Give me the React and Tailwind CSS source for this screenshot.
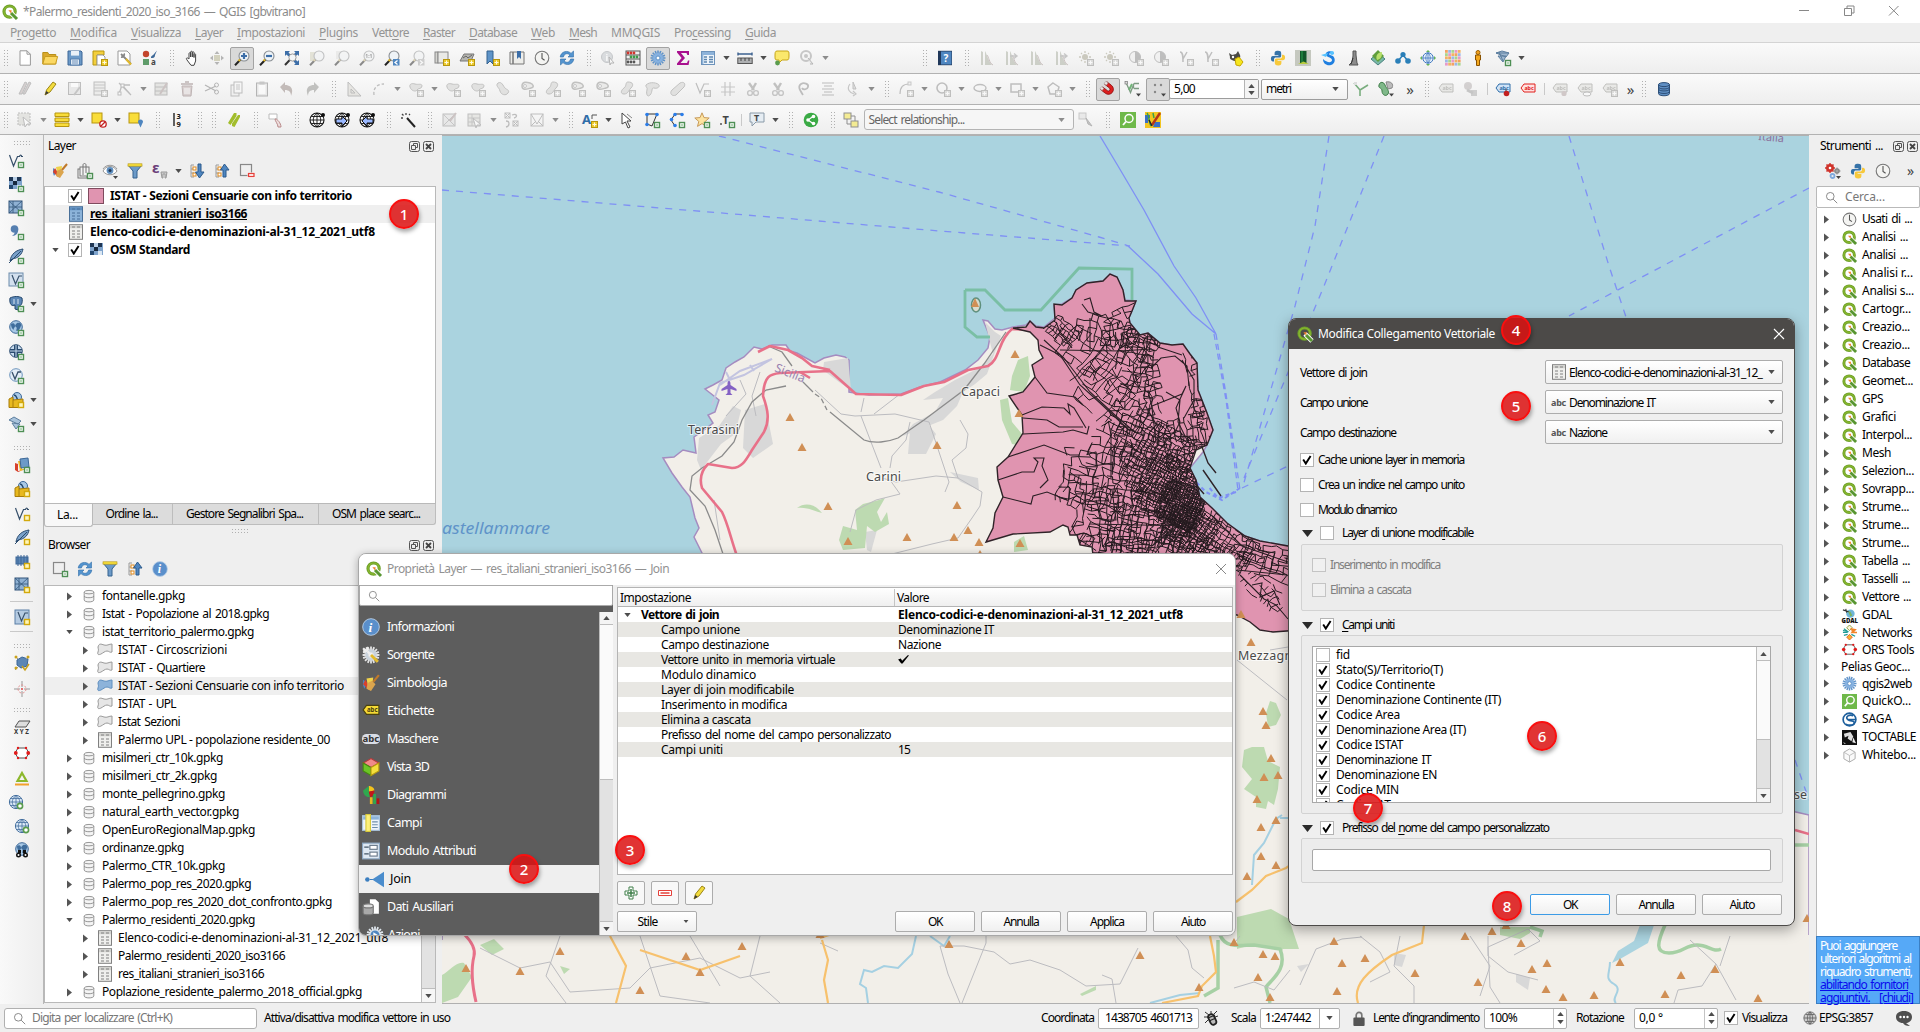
import React, { useLayoutEffect, useRef } from "react";

/* ---------- text fitted to the column width it was designed for ---------- */
function T({ w, className = "", children }) {
  const ref = useRef(null);
  useLayoutEffect(() => {
    const el = ref.current;
    if (!w || !el) return;
    el.style.letterSpacing = "0px";
    el.style.wordSpacing = "0px";
    const n = el.textContent.length || 1;
    if (w / el.getBoundingClientRect().width < 0.93) el.style.wordSpacing = "1.4px";
    el.style.letterSpacing = (w - el.getBoundingClientRect().width) / n + "px";
  }, [w]);
  return (
    <span ref={ref} className={"inline-block shrink-0 whitespace-pre " + className}>
      {children}
    </span>
  );
}

/* ---------- icon helpers, all on a 16px grid ---------- */
const p = (d, s = "none", f = "none", w = 1) => <path d={d} stroke={s} fill={f} strokeWidth={w} />;
const c = (x, y, r, f, s = "none", w = 1) => <circle cx={x} cy={y} r={r} fill={f} stroke={s} strokeWidth={w} />;
const r = (x, y, w, h, f, s = "none", sw = 1) => <rect x={x} y={y} width={w} height={h} fill={f} stroke={s} strokeWidth={sw} />;
const tx = (x, y, s, t, f = "#444", b = 700) => (
  <text x={x} y={y} fontSize={s} fill={f} fontWeight={b} fontFamily="Noto Sans, sans-serif">{t}</text>
);
const Y = <g>{r(9.5, 9.5, 6, 6, "#edcb2c", "#b7960f")}{p("M12.5 10.5v4M10.5 12.5h4", "#fffbe0")}</g>;
const G = <g>{r(10.5, 10.5, 5, 5, "#fff", "#4e8f55", 1.4)}{p("M13 11.8v2.4M11.8 13h2.4", "#8cbf90", "none", 0.8)}</g>;
const YB = <g>{r(10.5, 10.5, 5, 5, "#fff6b8", "#d3a90c", 1.4)}</g>;
const GR = <g>{r(9.5, 9.5, 6, 6, "#c9c9c5", "#8d8d88")}{p("M12.5 10.5v4M10.5 12.5h4", "#fff")}</g>;
const lens = (
  <g>{c(10, 6, 5, "#eef3f7", "#8a8f94", 1.1)}{p("M6.3 9.8L1 15.2", "#222", "none", 2)}{p("M6 9.5L4.6 11", "#e3b928", "none", 2)}</g>
);
const qlogo = (
  <g>
    {c(7.6, 7.6, 5.6, "none", "#6da12b", 3.2)}
    {c(7.6, 7.6, 5.6, "none", "#8db92e", 1.2)}
    {p("M8 8l7 7", "#fff", "none", 4.6)}
    {p("M9 9l6 6", "#589632", "none", 3)}
    {p("M6.4 6.2h3.2l-.4 3.2z", "none", "#f0802a")}
  </g>
);
const blob = p("M2 6C1 3 4 2 7 3s7-1 7 2-4 2-5 4-6 1-7-3z", "#8e8e8a", "#cfcfca");
const globe = (
  <g>{c(8, 8, 6.6, "#dbe9f7", "#456f9e")}{p("M8 1.5v13M1.5 8h13M3 4.5h10M3 11.5h10M8 1.5c-5 4-5 9 0 13M8 1.5c5 4 5 9 0 13", "#456f9e", "none", 0.8)}</g>
);
const bglobe = (
  <g>{c(8, 8, 7, "#fff", "#111", 1.1)}{p("M8 1v14M1 8h14M2.5 4.5h11M2.5 11.5h11M8 1c-5 4-5 10 0 14M8 1c5 4 5 10 0 14", "#111", "none", 0.9)}{c(14, 3, 2, "#111")}</g>
);
const earth = <g>{c(8, 7, 6.3, "#a9c9e6", "#3c6797")}{p("M3 4c3-2 4 0 4 2s-2 2-1 4c-2-1-3-3-3-6zM9 3c3-1 5 1 4 3s-2 5-4 5 1-3-1-4 0-3 1-4z", "none", "#3f6d9c")}</g>;
const vee = p("M1.5 3l4 11L9.5 4.5h2c1-3 3 0 1.5 0h2", "#37506b", "none", 1.2);
const cyl = (f, s) => <g>{p("M2.5 3.5v9c0 3 11 3 11 0v-9", s, f)}<ellipse cx="8" cy="3.6" rx="5.5" ry="2" fill={f} stroke={s} />{p("M2.5 8c0 2.6 11 2.6 11 0", s)}</g>;
const tbl = (f, s, h) => <g>{r(1.5, 0.7, 13, 14.6, f, s)}{r(2, 1.2, 12, 3, h)}{p("M4 3h3M9 3h3M4 7h3M9 7h3M4 10h3M9 10h3M4 13h3M9 13h3", s)}</g>;
const poly = (f, s) => p("M1 5c1-4 3-3 6-2s5-1 8-1v8c-2 1-3-1-5-1s-4 2-6 3-4 1-3-2 0-3 0-5z", s, f);
const gear = (f, s) => <g>{p("M8 .5v15M.5 8h15M2.7 2.7l10.6 10.6M13.3 2.7L2.7 13.3M5.2 1l5.6 14M1 5.2l14 5.6M10.8 1L5.2 15M15 5.2L1 10.8", s, "none", 1.6)}{c(8, 8, 5, f)}{c(8, 8, 2, "#fff", s)}</g>;
const brush = <g>{p("M1 5l4 3-3 5-1-3z", "none", "#4f86c6")}{p("M1 9l5 5 2-1-5-8z", "none", "#d7412c")}{p("M4 4l6-1-1 8-3 3z", "none", "#f0d24a")}{p("M5 8l4-2 3 3-4 6-4-2z", "none", "#dba54e")}{p("M10 7l5-6", "#c0792a", "none", 2)}</g>;
const pencil = <g>{p("M3 14l1.5-5L11 1l3 2-6 8z", "#9b8517", "#f3dc3e")}{p("M3 14l1.3-4 2.4 1.8z", "none", "#3a3a3a")}</g>;
const raster = <g>{r(1, 1, 13, 12, "#7ea3cc")}{r(1, 1, 4, 4, "#1f3654")}{r(9, 1, 4, 4, "#1f3654")}{r(5, 5, 4, 4, "#16283e")}{r(1, 9, 4, 4, "#23476f")}{r(9, 9, 4, 4, "#dbe7f3")}{r(5, 1, 4, 4, "#b9cfe6")}</g>;
const mesh = <g>{r(1, 1, 13, 12, "#8fb1d3", "#32557a")}{p("M1 7h13M1 1l13 12M14 1L1 13M5 1v12", "#32557a", "none", 0.8)}</g>;
const treeD = p("M2 2h3M2 2v12h3M2 6h3M2 10h3", "#9b9b9b");
const sq = (x, y) => r(x, y, 3, 3, "#fff", "#e08a1c");
const label = (f, s) => <g>{p("M1 7l3-4h11v8H4z", s, f)}{tx(4.4, 9.3, 5.4, "abc", s)}</g>;
const cut = <g>{p("M4 2l5 7M11 2L7 9", "#8e8e8a", "none", 2.4)}{c(5, 12, 2.4, "none", "#999", 1.4)}{c(11, 12, 2.4, "none", "#999", 1.4)}</g>;
const hist = <g>{p("M3 1v14h2V2zM7 15V1c2 3 3 10 7 14z", "none", "#a3b08c")}{p("M9 5c2 2 2 8 6 10", "#b78686")}</g>;
const sun = <g>{c(7, 7, 3, "#a8a06a")}{p("M7 1v2M7 11v2M1 7h2M11 7h2M3 3l1 1M10 10l1 1M3 11l1-1M10 4l1-1", "#a8a06a", "none", 1.3)}</g>;

const ICONS = {
  q: qlogo,
  new: <g>{p("M3 .8h7l3.4 3.4v11H3z", "#999", "#fff")}{p("M10 .8v3.4h3.4", "#999")}</g>,
  open: <g>{p("M.8 2.5h5l1 2h7V14H.8z", "#b8901a", "#dba92c")}{p("M3 6.5h12.6L13.6 14H.8z", "#c99d20", "#fbd863")}</g>,
  save: <g>{p("M1 1h13l1 1v13H1z", "#3c6797", "#6c9ac8")}{r(4, 1, 8, 4.6, "#e9f0f7")}{r(3.5, 9, 9, 6, "#dfe9f3", "#557fae")}{p("M5 11h6M5 13h6", "#557fae", "none", 0.8)}</g>,
  tmpl: <g>{p("M1 1h11v4h-7v10H1z", "#b7960f", "#f3cf3c")}{p("M5 5h6l2 2v8H5z", "#999", "#fff")}{Y}</g>,
  layout: <g>{p("M1 1h9l3 3v11H1z", "#999", "#fff")}{p("M4 4l3 3M7 3.5c1 2-1 4-3 3.5M7 7l7 7", "#888", "none", 1.8)}{p("M9 9l5 5.5", "#e2b92b", "none", 2)}</g>,
  style: <g>{c(4, 4, 3.2, "#c3452c")}{p("M9 8c0-3 2-2 3-4l3-3.5-2 4.5c0 3-2 3-4 3z", "none", "#3c6797")}{r(1, 9, 6, 6, "#5f9c6a")}{tx(9, 15, 8, "a")}</g>,
  pan: p("M5 9V3.5c0-1 1.6-1 1.6 0V7 2c0-1 1.7-1 1.7 0v5-4.5c0-1 1.7-1 1.7 0V7.5 4.5c0-1 1.6-1 1.6 0V11l-1.6 4.3H7L3 10c-1.4-2 0-3 2-1z", "#444", "#fff"),
  pansel: <g>{p("M8 1l2.5 3h-5zM8 15l2.5-3h-5zM1 8l3-2.5v5zM15 8l-3-2.5v5z", "none", "#777")}{r(5, 5, 6, 6, "#b9b352")}</g>,
  zoomin: <g>{lens}{p("M10 3v6M7 6h6", "#3c6ea8", "none", 2.2)}</g>,
  zoomout: <g>{lens}{p("M7 6h6", "#3c6ea8", "none", 2.2)}</g>,
  zoomfull: <g>{p("M1 1h5L4.5 2.5l2 2-2 2-2-2L1 6zM15 1v5l-1.5-1.5-2 2-2-2 2-2L10 1zM15 15h-5l1.5-1.5-2-2 2-2 2 2L15 10z", "none", "#3c6ea8")}{c(8.5, 7.5, 3.6, "#f3f6f8", "#999")}{p("M5.5 10.3L1 15", "#333", "none", 2)}</g>,
  zsel: <g>{r(1, 2, 8, 9, "#d6d39a")}{lens}</g>,
  zlay: <g>{r(2, 1, 7, 8, "#e0e0dc")}{lens}</g>,
  z11: <g>{lens}{tx(6.3, 8, 5, "1:1")}</g>,
  zprev: <g>{lens}{r(9, 9, 6.5, 6.5, "#4f86c0")}{p("M13.5 10.5l-2.5 2 2.5 2", "#fff", "none", 1.3)}</g>,
  znext: <g>{lens}{r(9, 9, 6.5, 6.5, "#aaa")}{p("M11 10.5l2.5 2-2.5 2", "#fff", "none", 1.3)}</g>,
  newmap: <g>{r(1, 2, 3, 11, "#d5d5d1", "#888")}{r(4, 2, 10, 11, "#e9e9e6", "#888")}{Y}</g>,
  new3d: <g>{p("M1 11l4-7h10l-3 7z", "#777", "#b5b5b0")}{p("M4 8l3-2 2 2 4-3", "#666")}{Y}</g>,
  bmnew: <g>{p("M3 1h6v13l-3-3-3 3z", "#34628f", "#5f94c8")}{Y}</g>,
  book: <g>{p("M1 2h3v12H1zM4 2h11v12H4z", "#777", "#ededea")}{p("M8 1h4v8l-2-2-2 2z", "none", "#3c6ea8")}</g>,
  clock: <g>{c(8, 8, 6.8, "#f4f4f2", "#777", 1.1)}{p("M8 3v5.4l2.6 1.8", "#555", "none", 1.1)}</g>,
  refresh: <g>{p("M1.2 7C2 1 9 0 12 3.4L14.5 1v6H9l2-2C8 2.5 5 4 4.4 7zM14.8 9C14 15 7 16 4 12.6L1.5 15V9H7l-2 2c3 2.5 6 1 6.6-2z", "#2f6da8", "#5494cf", 0.6)}</g>,
  ident: <g>{c(7, 7, 5.5, "#b8c4d0", "#8f9aa5")}{tx(5.5, 10.5, 9, "i", "#fff")}{p("M9 7l5 6-3 0-1 2z", "#777", "#fff")}</g>,
  abacus: <g>{r(1, 1, 14, 14, "#eee", "#555")}{p("M1 5h14M1 9h14", "#555")}{[3, 6, 9].map((x) => <g key={x}>{c(x, 3, 1.4, "#d0342c")}{c(x + 3, 7, 1.4, "#3c9a48")}{c(x, 12, 1.4, "#555")}</g>)}</g>,
  gear: gear("#86b1e0", "#5f92c8"),
  sigma: p("M2 1h12v4h-1.6L11.5 3H6l4 5-4.5 5H12l1-2.4h1.4L13.6 15H2v-1.4L6.6 8 2 2.4z", "none", "#a8108e"),
  table: <g>{r(1.5, 1.5, 13, 13, "#eef4fa", "#6d93bb")}{r(2, 2, 12, 3, "#8db3da")}{p("M4 7h3M9 7h4M4 9.5h3M9 9.5h4M4 12h3M9 12h4", "#5e86b0", "none", 1.3)}{r(2, 5, 1.4, 9, "#8db3da")}</g>,
  ruler: <g>{p("M1 4h14M1 2.5v3M15 2.5v3", "#3c6190", "none", 1.4)}{r(0.8, 8, 14.4, 5.5, "#aeb0b2", "#555")}{p("M4 8v3M8 8v3M12 8v3", "#444")}</g>,
  tip: <g>{p("M3 1h10c2 0 2 1 2 4s0 5-2 5H8l-3 3v-3H3C1 10 1 9 1 6s0-5 2-5z", "#c7a617", "#fbe86c")}{c(3.5, 13, 2.4, "#5a9c4e")}</g>,
  loc: <g>{c(7, 6, 5, "none", "#999", 2)}{c(7, 6, 2, "#999")}{p("M9 8l5 6h-3", "#777", "#ddd")}</g>,
  help: <g>{r(1, 0.8, 14, 14.4, "#20385a")}{r(4, 1.5, 10.5, 13, "#4f86c0")}{tx(6.5, 12, 10, "?", "#fff")}</g>,
  hist,
  hist2: <g>{hist}{p("M7 6h6M11 3.5l3 2.5-3 2.5", "#999", "none", 1.4)}</g>,
  sun1: <g>{sun}{GR}</g>,
  half: <g>{c(7, 7, 5.5, "#eee", "#888")}{p("M7 1.5a5.5 5.5 0 0 1 0 11z", "none", "#888")}{GR}</g>,
  gam: <g>{p("M2 2c3 0 3 4 3 10M9 2L5 9", "#888", "none", 1.5)}{GR}</g>,
  cat: <g>{p("M1 3l3 2 4-1 2-3 2 4c1 3-1 6-4 6S1 9 2 7z", "none", "#4b4a45")}{c(5, 7, 1.2, "#fff")}{p("M7 9l4-2 4 5-3 4-4-1z", "#c7a600", "#f6e61e")}</g>,
  python: <g>{p("M8 .8c-3 0-3.4 1-3.4 3v1.4H8.4V6H3C1 6 .8 8 1 9.5S2 11.6 4 11.6V9.4C4 8 5 7.6 6 7.6h3.4c1.2 0 1.8-.8 1.8-1.8V3.6C11.2 1.4 10.4.8 8 .8z", "none", "#3673a8")}{p("M8 15.4c3 0 3.4-1 3.4-3V11H7.6v-.8H13c2 0 2.2-2 2-3.4S14 4.8 12 4.8v2C12 8 11 8.6 10 8.6H6.6c-1.2 0-1.8.8-1.8 1.8v2.2c0 2.200.8 2.800 3.200 2.800z", "none", "#f7c93c")}</g>,
  batt: <g>{r(0, 0, 16, 16, "#c5c8bf")}{r(5, 1, 6.5, 13, "#12572a")}{r(6, 1, 2, 11, "#1e7b3c")}{p("M3 14h11l-5.500-2.500z", "none", "#b8cc3f")}</g>,
  swirl: <g>{p("M14 4c0-3-6-4-8-1-2 4 6 4 6 7s-5 3-9-1c0 5 4 7 8 6 4-1 5-6 2-9-2-1-4-1-4-2s3-1 5 0z", "none", "#1f7fe0")}{p("M1 5l7-2-2 4z", "none", "#58c3ff")}{c(12, 3, 2, "#58c3ff")}</g>,
  fig: <g>{p("M8 1h3v4l1 8 1 2H4l3-3 1-6z", "#555", "#8c8c8c")}{p("M8 8l-2 6", "#333")}</g>,
  leaf: <g>{p("M8 3l7 6-7 6-7-6z", "#49817f", "#79b8a6")}{p("M8 0l6 6-6 6-6-6z", "none", "#5f9e3d")}{p("M7 10C5 6 8 2 12 2c0 5-1 7-5 8z", "none", "#b8e06c")}</g>,
  nodes: <g>{p("M3 11L8 5l5 6", "#2a7fb8", "none", 1.5)}{c(8, 4.5, 2.6, "#2a7fb8")}{c(3, 11, 2.8, "#2a7fb8")}{c(13, 11, 2.8, "#2a7fb8")}</g>,
  gnav: <g>{c(8, 8, 5.2, "#eaf3fb", "#3f77c0")}{p("M8 2.8v10.400M2.800 8h10.400M8 2.800c-3 3-3 7 0 10.400M8 2.800c3 3 3 7 0 10.400", "#3f77c0", "none", 0.8)}{p("M8 0l2 2H6zM8 16l2-2H6zM0 8l2-2v4zM16 8l-2-2v4z", "none", "#64b45a")}</g>,
  grid: <g>{[0, 1, 2, 3, 4].map((i) => [0, 1, 2, 3, 4].map((j) => <g key={i + "" + j}>{r(j * 3.2, i * 3.2, 2.8, 2.8, ["#f4a261", "#9db8e8", "#a9d68e", "#e79acb", "#f2b366"][(i * 2 + j) % 5])}</g>))}</g>,
  person: <g>{c(8, 2.500, 2, "#f0a020", "#9c6100")}{p("M5.500 5h5v5h-1v5.500H6.500V10h-1z", "#8a5200", "#f3a81f")}</g>,
  meshlay: <g>{p("M1 3l6-2 7 2-3 4zM3 6h8l-3 6z", "#5d7f9f", "#9fb8d0")}{p("M1 3h13M4 2l4 9", "#5d7f9f")}{G}</g>,
  pencils: <g>{p("M2 13L8 1l2 1-5 11zM6 13l6-12 2 1-6 11z", "#888", "#c9a9a9")}</g>,
  pencil,
  saved: <g>{r(1.500, 1.500, 12, 12, "#ddd", "#888")}{r(4, 2, 7, 4, "#fff")}{p("M7 14l6-8", "#999", "none", 2)}</g>,
  rec: <g>{r(2, 1, 11, 13, "#e5e5e0", "#888")}{p("M2 4h11M2 7h11M2 10h11", "#999")}{GR}</g>,
  vtool: <g>{p("M2 13L5 4M5 4h8M5 4l8 9M2 2l12 12", "#888", "none", 1.300)}{r(4, 3, 3, 3, "#fff", "#888")}{r(1, 11, 3, 3, "#fff", "#888")}</g>,
  editrec: <g>{r(1, 2, 12, 12, "#d5d5c9", "#888")}{p("M1 6h12M1 10h12", "#888")}{p("M6 13L13 2", "#b98d8d", "none", 2)}</g>,
  trash: <g>{p("M2 3h12M6 1h4", "#a06e6e", "none", 1.500)}{p("M3 5h10l-1 10H4z", "#a06e6e", "#d3a9a9")}{p("M6 7v6M8 7v6M10 7v6", "#fff")}</g>,
  cutx: <g>{p("M1 4l11 6M1 10l11-5", "#777", "none", 1.300)}{c(12.500, 4, 2, "none", "#777")}{c(12.500, 11, 2, "none", "#777")}</g>,
  copy: <g>{r(2, 4, 8, 11, "#eee", "#888")}{r(5, 1, 8, 11, "#f7f7f7", "#888")}{p("M7 4h4M7 6h4M7 8h4", "#999")}</g>,
  paste: <g>{r(2.500, 2, 11, 13, "#ddd", "#777")}{r(4.500, 4, 7, 9, "#fff")}{r(5.500, 0.500, 5, 3, "#999")}</g>,
  undo: p("M1 6l5-5v3c6 0 9 4 6 11 0-4-2-6-6-6v3z", "none", "#a47f72"),
  redo: p("M15 6l-5-5v3c-6 0-9 4-6 11 0-4 2-6 6-6v3z", "none", "#8e8e86"),
  setsq: p("M2 1v14h13zM5 8v4h4z", "#888", "#ddd8c6"),
  curve: <g><path d="M3 14C2 7 6 3 13 3" stroke="#888" fill="none" strokeWidth="1.300" strokeDasharray="3 2" /></g>,
  blob: <g>{blob}{GR}</g>,
  blob2: <g>{p("M3 2c4-2 5 3 7 5s5 2 3 5-7 2-8-2-5-5-2-8z", "#8e8e8a", "#d0d0cb")}</g>,
  blob3: <g>{p("M2 5c0-5 5-4 8-3s5 4 1 5-9 3-9-2z", "#8e8e8a", "#e1e1dc", 1.500)}{c(5, 5, 1.500, "#fff", "#999")}{GR}</g>,
  blob4: <g>{p("M8 1c5 0 6 3 3 6s-3 6-7 6-3-4 0-6 1-6 4-6z", "#8e8e8a", "#cfcfca")}{GR}</g>,
  shape: p("M1 4c4-4 12-2 13 0s-2 4-5 3-1 4-4 7-4-2-3-5-2-3-1-5z", "#8e8e8a", "#cfcfca"),
  slug: p("M10 2c4-2 6 1 4 4l-8 8c-4 2-7-2-4-5z", "#8e8e8a", "#cfcfca"),
  cutg: cut,
  vnode: <g>{p("M1 2l4 10L9 3h5", "#888", "none", 1.200)}{GR}</g>,
  cross: <g>{p("M5 1v14M10 1v14M1 6h14M1 11h14", "#999", "none", 1.200)}</g>,
  spiral: <g>{p("M8 14C4 8 3 5 6 3s8 0 7 3-5 3-6 1", "#888", "none", 1.800)}</g>,
  lines: p("M2 2h12M4 5h8M2 8h12M4 11h8M2 14h12", "#aaa", "none", 1.500),
  rot: <g>{p("M8 1l3 7h-3z", "#888", "#ccc")}{p("M5 3c-4 5 0 9 4 10M8 10l3 3-3 2", "#999", "none", 1.200)}</g>,
  arcn: <g>{p("M2 13C2 6 5 3 11 3", "#888", "none", 1.200)}{r(10, 1, 3, 3, "#eee", "#999")}{GR}</g>,
  circ: <g>{c(7, 7, 5, "none", "#888", 1.600)}{GR}</g>,
  elli: <g><ellipse cx="8" cy="7" rx="6" ry="3.500" fill="none" stroke="#888" strokeWidth="1.400" />{GR}</g>,
  rectn: <g>{r(2, 3, 10, 8, "none", "#888", 1.500)}{GR}</g>,
  pent: <g>{p("M7 2l6 4-2 7H4L2 6z", "#888", "none", 1.500)}{GR}</g>,
  magnet: (
    <g transform="rotate(-52 8 8)">
      {p("M3 2.500v6a5 5 0 0 0 10 0v-6H9.700v6a1.700 1.700 0 0 1-3.400 0v-6z", "#8f1010", "#dd1f1f", 0.8)}
      {r(3.2, 1.5, 2.8, 2.8, "#f0e4e4", "#999", 0.5)}{r(10, 1.5, 2.8, 2.8, "#f0e4e4", "#999", 0.5)}
    </g>
  ),
  vsnap: <g>{p("M1 1.500l4.500 10L9 2.500M8.500 2.500v5M9 7.500h5M9 2.500h5", "#7d9b82", "none", 1.300)}{r(0, 0.500, 2.500, 2.500, "#ddd", "#777", 0.7)}{p("M4 9l3-6", "#6fb477", "none", 2)}{p("M11 12.500h5l-2.500 3z", "none", "#444")}</g>,
  dots: <g>{c(5, 4, 1.200, "#888")}{c(11, 4, 1.200, "#888")}{c(5, 11, 1.200, "#888")}{p("M11 12.500h5l-2.500 3z", "none", "#444")}</g>,
  yline: <g>{p("M1 2l6 7v6M7 9l8-5", "#79ad7e", "none", 1.600)}{r(1, 1, 3, 3, "#ddd")}</g>,
  topo: <g>{p("M8 1c5-1 8 2 6 6l-4 1z", "#888", "#bbb")}{p("M1 4c1-4 5-3 6 0s5 6 3 9-6 1-6-3-4-2-3-6z", "#3f7d49", "#7fb889")}{p("M11 12.500h5l-2.500 3z", "none", "#444")}</g>,
  lab: label("#deded2", "#8a8a80"),
  labs: <g>{c(5, 5, 4, "#b9a9a9")}{r(8, 9, 6, 6, "#aaa")}{p("M4 9l6 3", "#999", "none", 3)}</g>,
  labp: <g>{label("#cfe3f7", "#2f6da8")}{p("M11 8v3", "#333")}{c(11.500, 12.500, 2.800, "#c32020")}</g>,
  labr: label("#ffe1e1", "#e0201c"),
  labg: <g>{label("#deded2", "#8a8a80")}{c(12, 12.500, 2.600, "#c49a9a")}</g>,
  laba: <g>{label("#deded2", "#8a8a80")}{GR}</g>,
  labe: <g>{label("#deded2", "#8a8a80")}<ellipse cx="10" cy="13" rx="4" ry="2" fill="#fff" stroke="#888" /></g>,
  db: <g>{cyl("#5f8fc4", "#2d4f78")}{p("M2.500 6c0 2.600 11 2.600 11 0M2.500 10.500c0 2.600 11 2.600 11 0", "#2d4f78")}</g>,
  sel: <g><rect x="1" y="1" width="12" height="12" fill="#d4d4c4" stroke="#888" strokeDasharray="2 1" />{p("M6 5l8 7h-4l-2 3z", "#888", "#fff")}</g>,
  form: <g>{p("M1 1h14v3.500H1zM1 6h14v3.500H1zM1 11h14v3.500H1z", "#b7960f", "#f9dd3a")}</g>,
  desel: <g>{r(1, 1, 10, 10, "#f9dd3a", "#b7960f")}{c(12, 12, 3.200, "#fff", "#c32020", 1.300)}{p("M10 14l4-4", "#c32020", "none", 1.300)}</g>,
  selloc: <g>{r(1, 1, 10, 10, "#f9dd3a", "#b7960f")}{p("M10 10a2.500 2.500 0 1 1 5 0l-2.500 5.500z", "none", "#4f86c0")}</g>,
  num: <g>{p("M4 1v13", "#111", "none", 1.300)}{tx(6.500, 7, 7.500, "3", "#111")}{tx(6.500, 15, 7.500, "9", "#111")}</g>,
  slash: <g>{p("M2 11L8 1h2.500v3L4.500 13zM6 14v-2.500L12 3h2v2L8.500 15z", "none", "#a2bd2c")}</g>,
  point: <g>{p("M2 2h8v5H2z", "#bbb", "#fff")}{p("M9 7c1 0 5 4 5 8h-3c0-3-3-6-3-8z", "#b98989", "#ecdcdc")}</g>,
  g1: bglobe,
  g2: <g>{bglobe}{p("M2 7h6V4l5 5-5 5v-3H2z", "#111", "#9ab8ff")}</g>,
  g3: <g>{bglobe}{p("M14 7H8V4L3 9l5 5v-3h6z", "#111", "#9ab8ff")}</g>,
  wand: <g>{p("M7 6l8 9", "#222", "none", 2)}{p("M2 2l1.500 1.500M6 1v2M1 6h2M9 3l1-1", "#444", "none", 1.300)}</g>,
  geo: <g>{r(1, 2, 12, 12, "#ddd", "#888")}{p("M1 2l12 12M13 2L1 14", "#999")}{p("M8 9l6-8", "#b98d8d", "none", 2)}</g>,
  geo2: <g>{r(1, 2, 12, 12, "#d9d9cc", "#888")}{p("M1 6h12M1 10h12M5 2v12", "#999")}{p("M6 6l8 7h-4l-1 3z", "#888", "#fff")}</g>,
  geo3: <g>{r(1, 1, 5, 5, "none", "#888")}{r(9, 9, 5, 5, "none", "#888")}{p("M1 1l5 5M6 1L1 6M9 9l5 5M14 9l-5 5", "#888")}{p("M8 3c5-2 6 2 2 3M2 9c4 0 4 5 0 6", "#888", "none", 1.300)}</g>,
  geo4: <g>{r(2, 2, 12, 12, "none", "#888")}{p("M2 2l6 10 6-10M2 14l4-4M14 14l-4-4", "#888")}</g>,
  lab2: <g>{tx(0, 12, 13, "A", "#2f6da8")}{p("M10 3h5M10 3v4", "#555")}{Y}</g>,
  arr: <g>{p("M3 1l9 8H8l3 6-2 1-2.500-6L3 12z", "#444", "#fff")}{p("M8 2l5 4", "#888")}</g>,
  polyg: <g>{p("M3 2h10l-5 12-5-2z", "#333", "#f0f0ee")}{c(3, 2.500, 1.800, "#2b7de9")}{c(13, 2.500, 1.800, "#2b7de9")}{c(3, 12.500, 1.800, "#2b7de9")}{G}</g>,
  polyl: <g>{p("M13 2H6L2 8l4 6", "#333")}{c(13, 2.500, 1.800, "#2b7de9")}{c(6, 2.500, 1.800, "#2b7de9")}{c(2.500, 7.500, 1.800, "#2b7de9")}{c(6, 13.500, 1.800, "#2b7de9")}{G}</g>,
  star: <g>{p("M8 .8l2 4.800 5.200.400-4 3.400 1.300 5L8 11.600l-4.500 2.800 1.300-5-4-3.400L6 5.600z", "#c79a5a", "#fde3a0")}{G}</g>,
  textT: <g>{tx(3.500, 12, 11, "T")}{c(2, 12, 1, "#555")}{G}</g>,
  tbox: <g>{p("M1 1h14v9H7l-4 4v-4H1z", "#8a9aa8", "#e6edf3")}{tx(5, 9, 9, "T")}</g>,
  share: <g>{c(8, 8, 7.300, "#3aaa45")}{p("M5 8l5-3.500M5 8l5 3.500", "#fff", "none", 1.200)}{c(5, 8, 1.800, "#fff")}{c(10.500, 4.500, 1.800, "#fff")}{c(10.500, 11.500, 1.800, "#fff")}</g>,
  rel: <g>{r(1, 1, 7, 6, "#f4ea7c", "#777")}{r(8, 9, 7, 6, "#f4ea7c", "#777")}{p("M4 7v5h4M8 4h4v5", "#777")}</g>,
  relx: <g>{r(1, 1, 7, 6, "#ddd", "#999")}{p("M8 6l6 8-4-2z", "#777", "#999")}</g>,
  quick: <g>{r(0, 0, 16, 16, "#6fb94a")}{c(9, 6.500, 4, "none", "#fff", 1.500)}{p("M6 9.500L3 13", "#fff", "none", 1.800)}</g>,
  osm: <g>{r(0, 0, 16, 16, "#f2c521")}{p("M0 3h5v3H3v5H0zM10 10h5v5H8z", "none", "#3b6fc4")}{p("M2 1c3 4 1 8 4 13M8 1l1 5", "#3ba04a", "none", 1.500)}{p("M7 13L15 1", "#b53518", "none", 2.400)}{p("M4 8l3 6", "#222", "none", 1.400)}</g>,
  vadd: <g>{vee}{G}</g>, vaddy: <g>{vee}{YB}</g>,
  rasadd: <g>{raster}{G}</g>, meshadd: <g>{mesh}{G}</g>, meshy: <g>{mesh}{YB}</g>,
  comma: <g>{c(6.500, 5, 3.800, "#557fb0")}{p("M10 4c1 5-2 8-6 8 3-2 3-4 3-6z", "none", "#557fb0")}{G}</g>,
  feather: <g>{p("M2 13C3 6 8 2 15 1c-1 5-4 9-11 10z", "#2b4c70", "#7aa1ca")}{p("M1 15L13 3", "#2b4c70")}{G}</g>,
  feathery: <g>{p("M2 13C3 6 8 2 15 1c-1 5-4 9-11 10z", "#2b4c70", "#7aa1ca")}{p("M1 15L13 3", "#2b4c70")}{YB}</g>,
  vbox: <g>{r(1, 1, 14, 13, "#d3e0ee", "#6d8cab")}{p("M4 3l3.500 9L11 4h3", "#37506b", "none", 1.200)}{G}</g>,
  vboxy: <g>{r(1, 1, 14, 14, "#b5cbe2", "#5a7fa6")}{p("M4 3l3.500 9L11 4h3", "#37506b", "none", 1.200)}{YB}</g>,
  pg: <g>{p("M2 2c4-2 9-2 12 0 1 5-1 8-3 8l-1 4-3-1V9c-3 2-6-1-5-7z", "#23466c", "#5b86b5")}{p("M6 3v5M10 3v5", "#dbe6f2")}{G}</g>,
  wms: <g>{earth}{G}</g>,
  wcs: <g>{c(8, 7, 6.300, "#c7dbee", "#2b4c70")}{p("M2 5h12v4H2zM6 1h4v12H6z", "none", "#2b4c70")}{p("M2 7h12M8 1v12", "#c7dbee")}{G}</g>,
  wfs: <g>{c(8, 7, 6.300, "#e4eef7", "#6c94bd")}{p("M4 4l3 7 3-7h3", "#37506b", "none", 1.300)}{G}</g>,
  box: <g>{c(9, 5, 4.500, "#a9c9e6", "#3c6797")}{p("M6 3c3 0 2 3 4 5", "#23466c", "none", 1.500)}{p("M1 7l4-2v3l10-1v7l-4 1.500H1z", "#a87d0b", "#e8b91f")}{p("M5 8v7", "#a87d0b")}{YB}</g>,
  mladd: <g>{p("M1 4l5-3 7 4-3 3zM4 7l8 1-4 5z", "#5d7f9f", "#a9c3dc")}{G}</g>,
  layers: <g>{p("M1 6l3 1v7l5-1-5 2-3-2z", "none", "#d7412c")}{p("M4 4l4 0v8l5 0-7 2z", "none", "#f0b92a")}{p("M6 2l8-1 1 9-8 1z", "#3c6797", "#6c9ac8")}{G}</g>,
  chip: <g>{r(2, 4, 12, 7, "#5b86b5", "#3c6797")}{p("M4 2v11M7 2v11M10 2v11M13 2v11", "#3c6797")}{YB}</g>,
  vert: <g>{p("M3 5l5-3 6 2-1 7-6 2-4-3z", "#3c6797", "#5b86b5")}{p("M1 1l3 3M15 1l-3 3M1 15l3-3", "#999")}{c(2, 2, 1.500, "#c9a21c")}{c(14, 2, 1.500, "#c9a21c")}{c(2, 13, 1.500, "#c9a21c")}{p("M8 11l3 4 4-6", "#c9a21c", "none", 1.500)}</g>,
  cross2: <g>{p("M8 0v6M8 10v6M0 8h6M10 8h6", "#999")}<circle cx="8" cy="8" r="4" fill="none" stroke="#e58c8c" strokeDasharray="2 1.500" />{c(8, 8, 0.900, "#d33")}</g>,
  xyz: <g>{p("M5 2h11l-4 6H1z", "#555", "#ddd")}{tx(0, 15, 6.200, "X Y Z", "#333")}</g>,
  hex: <g>{p("M4 3h8l3 5-3 5H4L1 8z", "#555", "#fff")}{c(1.800, 8, 1.900, "#e21a1a")}{c(14.200, 8, 1.900, "#e21a1a")}{c(4, 3, 1.200, "#e21a1a")}{c(12, 13, 1.200, "#e21a1a")}{c(12, 3, 1.200, "#e21a1a")}{c(4, 13, 1.200, "#e21a1a")}</g>,
  alpha: <g>{p("M8 3l4.500 8h-9z", "#8cb82c", "none", 2.200)}{p("M1 14.500h14", "#f2a12c", "none", 2)}</g>,
  gq: <g>{globe}{c(12, 12, 2.600, "#fff", "#5a9c4e", 1.600)}</g>,
  binoc: <g>{earth}{c(4.500, 13, 2.500, "#111")}{c(11.500, 13, 2.500, "#111")}{c(4.500, 13, 1, "#fff")}{c(11.500, 13, 1, "#fff")}{r(4, 8, 3, 3.500, "#111")}{r(9, 8, 3, 3.500, "#111")}</g>,
  brush,
  addgrp: <g>{r(1, 6, 9, 9, "#f4f4f4", "#777")}{r(3, 4, 9, 9, "#f4f4f4", "#777")}{p("M6 12V2c0-2 3-2 3 0v8", "#777")}{G}</g>,
  eye: <g>{p("M1 8c3-6 11-6 14 0-3 5-11 5-14 0z", "#999", "#fff")}{c(8, 7.500, 3.400, "#5f8fc0")}{c(8, 7.500, 1.500, "#1f3654")}{p("M1 6C4 1 12 1 15 6", "#999")}{p("M11 13h5l-2.500 3z", "none", "#444")}</g>,
  funnel: <g>{p("M1 2h14l-5 6v7H6V8z", "#34628f", "#6c9ac8")}{r(1, 0.800, 14, 2.400, "#f4dc3b", "#b7960f", 0.600)}</g>,
  eps: <g>{tx(0, 10, 15, "ε", "#6b3f7a")}{p("M9 9h6l-1 6h-1v-4h-2v4h-1z", "#999", "#ccc")}</g>,
  expd: <g>{treeD}{sq(4, 4)}{sq(4, 10)}{p("M9 1h3v8h3l-4.500 6L6.500 9H9z", "#2d5b8c", "#4f86c0")}</g>,
  expu: <g>{treeD}{sq(4, 4)}{sq(4, 10)}{p("M9 14h3V7h3l-4.500-6L6.500 7H9z", "#2d5b8c", "#4f86c0")}</g>,
  rem: <g>{r(1.500, 1.500, 11, 11, "none", "#888", 1.200)}{r(9, 10, 6.500, 4.500, "#fff", "#fff")}{r(9.500, 10.500, 5.500, 3, "#fff", "#e5403a", 1.300)}</g>,
  addl: <g>{r(1.500, 1.500, 11, 11, "none", "#888", 1.200)}{G}</g>,
  info: <g>{c(8, 8, 7.400, "#5a8fcb", "#b9cfe6", 0.800)}<text x="5.800" y="12.400" fontSize="12" fontStyle="italic" fontWeight="700" fill="#fff" fontFamily="Liberation Serif">i</text></g>,
  gpkg: cyl("#f4f4f4", "#888"),
  poly: poly("#e6e6e6", "#999"), polyb: poly("#8db3da", "#5f8fc0"),
  tbl: tbl("#efefed", "#808080", "#d2d2cf"), tblb: tbl("#8cb3d9", "#486f98", "#5f8fc0"),
  raster,
  wrench: <g>{gear("#c9d3dd", "#e3e3e3")}{p("M1 2l3 3M4 1c2 3 0 4-3 3M5 5l9 9", "#eee", "none", 2)}{p("M8 8l6 6", "#e2b92b", "none", 2.500)}</g>,
  laby: label("#f6da35", "#4a4210"),
  mask: <g><rect x="0" y="3.500" width="16" height="9" rx="4" fill="#d9dde6" />{tx(0.500, 11, 8.500, "abc", "#333")}</g>,
  cube: <g>{p("M8 .5l7 4-7 4-7-4z", "#b23b3b", "#f08a8a")}{p("M1 4.500l7 4v7l-7-4z", "#448a10", "#6cc427")}{p("M15 4.500l-7 4v7l7-4z", "#b79a10", "#f4e03c")}</g>,
  diag: <g>{p("M6 5V0c3 0 5 2 5 4z", "none", "#f3c21c")}{p("M6 5L11 4c0 3-2 6-4 6z", "none", "#c31818")}{p("M6 5l1 5C3 10 1 7 1 4l5-4z", "none", "#2fa84f")}{r(7, 10, 2.400, 6, "#e8b91f")}{r(10, 7, 2.400, 9, "#2fa84f")}{r(13, 11, 2.400, 5, "#b31313")}</g>,
  campi: <g>{r(0.500, 1.500, 15, 13, "#eef4fa", "#a9c3dc")}{r(1, 2, 14, 3, "#8db3da")}{p("M9 7h5M9 9.500h5M9 12h5", "#6d8cab")}{r(3.500, 0.500, 4, 15, "#fdf07a", "#d8c93a")}</g>,
  modulo: <g>{r(0.500, 1, 15, 14, "#dfe9f3", "#8da8c3")}{p("M2 4.500h4M2 10.500h4", "#456")}{r(7, 3, 6.500, 3.500, "#fff", "#678")}{r(7, 9, 6.500, 3.500, "#fff", "#678")}</g>,
  join: <g>{c(2, 8, 1.900, "#3c7fc0")}{p("M4 8h4", "#3c7fc0")}{p("M16 1.500v13L6 8z", "none", "#4a8ccc")}</g>,
  aux: <g>{p("M7 1h5l3 3v10H7z", "none", "#fff")}{p("M1 7v6c0 2.500 9 2.500 9 0V7", "#777", "#a9a9a9")}<ellipse cx="5.500" cy="7" rx="4.500" ry="1.800" fill="#ddd" stroke="#777" /></g>,
  act: <g>{gear("#dfe6ec", "#dfe6ec")}{c(8, 8, 4, "#4f86c0")}{p("M6.500 5.500l4 2.500-4 2.500z", "none", "#fff")}</g>,
  gears: <g>{c(5, 5, 2.800, "none", "#d0342c", 2.400)}{p("M5 0v10M0 5h10M1.500 1.500l7 7M8.500 1.500l-7 7", "#d0342c", "none", 1.400)}{c(5, 5, 1.300, "#fff")}{c(12, 8, 2, "none", "#888", 1.500)}{p("M12 4.500v7M8.500 8h7", "#888")}{c(7.500, 13, 2, "none", "#7fa9dc", 1.800)}{p("M11 13h5l-2.500 3z", "none", "#444")}</g>,
  gdal: <g>{c(9, 6, 4.500, "#6fb5d8")}{p("M6 3l3 1 2 4-2 1z", "none", "#7db35c")}{p("M1 2l6 2M4 1l1 4", "#333", "none", 1.200)}{tx(-0.500, 15.500, 6.400, "GDAL", "#111", 900)}</g>,
  netw: <g>{p("M8 0l3 3-3 3-3-3z", "#8a9e3b", "#fbf4dc", 1)}{p("M1 6l6 1M2 4l4 3M1 8h5", "#1e9b94", "none", 1.300)}{p("M9 4l5 1-3 3h5M10 6l3 0", "#f2842a", "none", 1.800)}{p("M8 16l3-3-3-3-3 3z", "#e0612a", "#f6b32a", 1)}{p("M2 11l4-1M10 10l4 2", "#1e9b94", "none", 1.300)}</g>,
  saga: <g>{c(8, 8, 6.800, "none", "#1d5f9c", 1.800)}{p("M12 4C8 2 3 5 6 8s6 0 7 3-5 4-9 2", "#1d5f9c", "none", 1.800)}{p("M6 8h9", "#1d5f9c", "none", 1.500)}</g>,
  toc: <g>{r(0, 0, 16, 16, "#111")}{p("M2 4l7-2 3 5-2 5-4-3 1-3-4 2zM1 13l3 1-1 1z", "none", "#ddd")}{p("M12 8l3 6-4-1z", "none", "#eee")}</g>,
  wb: <g>{p("M8 1l6 3.500v7L8 15l-6-3.500v-7z", "#aaa", "#fafafa")}{p("M8 15V8L2 4.500M8 8l6-3.500", "#bbb")}</g>,
  search: <g>{c(6.500, 6.500, 4.700, "none", "#888", 1.200)}{p("M10 10l5 5", "#888", "none", 1.200)}</g>,
};

const Ic = ({ n, s = "size-4" }) => (
  <svg viewBox="0 0 16 16" className={s + " shrink-0 overflow-visible"}>{ICONS[n]}</svg>
);
const Dn = ({ c: cl = "fill-[#4d4d4d]", s = "w-[7px] h-[4px]" }) => (
  <svg viewBox="0 0 8 5" className={s + " shrink-0 " + cl}><path d="M0 0h8L4 5z" /></svg>
);
const Up = () => <svg viewBox="0 0 8 5" className="h-[4px] w-[7px] shrink-0 fill-[#4d4d4d]"><path d="M0 5h8L4 0z" /></svg>;
const Rt = () => <svg viewBox="0 0 5 8" className="h-[9px] w-[5px] shrink-0 fill-[#555]"><path d="M0 0v8l5-4z" /></svg>;

/* Toolbar run: | handle, v / w arrows, s separator, - disabled, * pressed */
function Set({ t }) {
  return t.split(" ").map((k, i) => {
    if (k === "|")
      return (
        <div key={i} className="flex h-4 w-[16.5px] shrink-0 justify-end gap-[2px] pr-[5px]">
          <div className="w-px bg-[repeating-linear-gradient(#b0b0b0_0_1px,transparent_1px_3px)]" />
          <div className="w-px bg-[repeating-linear-gradient(#b0b0b0_0_1px,transparent_1px_3px)]" />
        </div>
      );
    if (k === "v" || k === "w")
      return <div key={i} className="flex w-3 shrink-0 justify-center"><Dn c={k === "v" ? "fill-[#4d4d4d]" : "fill-[#8c8c8c]"} /></div>;
    if (k === "s") return <div key={i} className="mx-[3px] h-3 w-px shrink-0 bg-[#c9c9c9]" />;
    if (k[0] === "-") return <div key={i} className="flex w-[25px] shrink-0 justify-center opacity-50 grayscale-[60%]"><Ic n={k.slice(1)} /></div>;
    if (k[0] === "*")
      return (
        <div key={i} className="flex w-[25px] shrink-0 justify-center">
          <div className="flex h-[23px] w-6 items-center justify-center rounded-[2px] border border-[#a3a3a3] bg-[#d9d9d9]"><Ic n={k.slice(1)} /></div>
        </div>
      );
    return <div key={i} className="flex w-[25px] shrink-0 justify-center"><Ic n={k} /></div>;
  });
}
const Bar = ({ h = "h-[31px]", children }) => (
  <div className={h + " flex shrink-0 items-center border-b border-[#b2b2b2] bg-gradient-to-b from-[#fafafa] to-[#eeeeee]"}>
    <div className="-ml-1" />
    {children}
  </div>
);

const Check = ({ on, off }) => (
  <div className={"flex size-[14px] shrink-0 items-center justify-center border " + (off ? "border-[#c4c4c4] bg-[#f0f0f0]" : "border-[#b4b4b4] bg-white")}>
    {on && <svg viewBox="0 0 10 10" className="size-[10px]"><path d="M1.200 4.600l2.600 4L8.600 1" fill="none" stroke="#000" strokeWidth="1.900" /></svg>}
  </div>
);
const Btn = ({ children, blue, w = "w-20" }) => (
  <div className={w + " flex h-[21px] shrink-0 items-center justify-center rounded-[2px] border bg-gradient-to-b from-white to-[#f0f0f0] " + (blue ? "border-[#3c9be6]" : "border-[#acacac]")}>{children}</div>
);
const Badge = ({ n, at }) => (
  <div className={"absolute flex size-[30px] items-center justify-center rounded-full border-2 border-[#fa0f0f] bg-[#dc1010]/85 text-[15px] font-medium text-white shadow-[1px_3px_4px_rgba(0,0,0,0.35)] " + at}>{n}</div>
);
const Float = () => (
  <div className="flex gap-[3px]">
    <svg viewBox="0 0 11 11" className="size-[11px]"><rect x=".5" y=".5" width="10" height="10" rx="2" fill="#eee" stroke="#555" /><path d="M4.500 4V2.500h4v4H7M2.500 4.500h4v4h-4z" fill="none" stroke="#555" /></svg>
    <svg viewBox="0 0 11 11" className="size-[11px]"><rect x=".5" y=".5" width="10" height="10" rx="2" fill="#eee" stroke="#555" /><path d="M3 3l5 5M8 3L3 8" stroke="#444" strokeWidth="1.800" /></svg>
  </div>
);
const Dots = () => (
  <div className="flex h-[4px] w-4 flex-col gap-[2px]">
    <div className="h-px bg-[repeating-linear-gradient(90deg,#b0b0b0_0_1px,transparent_1px_3px)]" />
    <div className="h-px bg-[repeating-linear-gradient(90deg,#b0b0b0_0_1px,transparent_1px_3px)]" />
  </div>
);
const U = ({ children }) => <span className="underline underline-offset-2">{children}</span>;

/* ---------- map ---------- */
function rng(seed) {
  let s = seed;
  return () => ((s = (s * 16807) % 2147483647) / 2147483647);
}
/* street blocks: centre x, centre y, width, height, angle, step, jitter, density */
const PATCHES = [
  [1105, 330, 60, 26, 12, 7, 1.5, 0.7], [1060, 328, 34, 18, 40, 4, 1.2, 0.8], [1122, 326, 44, 34, -20, 6, 1.5, 0.8],
  [1080, 352, 56, 40, 35, 9, 2, 0.7], [1118, 368, 50, 60, 38, 8, 2, 0.7], [1136, 352, 34, 44, 10, 6, 1.5, 0.8],
  [1104, 385, 50, 50, 45, 9, 2.5, 0.65], [1132, 405, 36, 60, 20, 6, 2, 0.8], [1148, 340, 26, 16, 20, 5, 1, 0.9],
  [1138, 440, 50, 56, 28, 5.5, 1.5, 0.85], [1160, 462, 60, 70, 28, 4, 1.2, 0.9], [1185, 448, 40, 60, -8, 6, 1.5, 0.8],
  [1175, 492, 70, 60, 28, 3, 1, 0.92], [1180, 505, 44, 44, 20, 2.3, 0.8, 0.95], [1190, 528, 50, 40, 35, 3.4, 1, 0.9],
  [1100, 478, 76, 66, 8, 8, 2.6, 0.7], [1090, 490, 60, 40, 20, 6, 2, 0.6], [1110, 450, 40, 50, 10, 8, 3, 0.6],
  [1120, 520, 90, 60, 5, 8, 2.5, 0.7], [1150, 535, 90, 50, 12, 5, 1.6, 0.8], [1115, 545, 60, 30, 5, 7, 2, 0.7],
  [1225, 538, 70, 34, 32, 5, 1.4, 0.85], [1262, 556, 60, 24, 14, 6, 1.6, 0.8], [1200, 548, 90, 24, 20, 5, 1.5, 0.8],
  [1196, 385, 14, 90, -8, 6, 2, 0.6], [1200, 425, 20, 50, -4, 6, 2, 0.6], [1085, 535, 30, 30, 30, 8, 3, 0.6],
  [1265, 590, 44, 18, 45, 5, 2, 0.45], [1270, 566, 60, 26, 20, 8, 2, 0.6], [1150, 385, 26, 60, -10, 6, 1.5, 0.75],
];
function streets() {
  const rnd = rng(4711);
  let d = "";
  for (const [cx, cy, w, h, a, st, j, dens] of PATCHES) {
    const co = Math.cos((a * Math.PI) / 180), si = Math.sin((a * Math.PI) / 180);
    const nx = Math.round(w / st), ny = Math.round(h / st);
    const g = [];
    for (let i = 0; i <= nx; i++) {
      g.push([]);
      for (let k = 0; k <= ny; k++) {
        const x = -w / 2 + i * st + (rnd() - 0.5) * 2 * j, y = -h / 2 + k * st + (rnd() - 0.5) * 2 * j;
        g[i].push([(cx + x * co - y * si).toFixed(1), (cy + x * si + y * co).toFixed(1)]);
      }
    }
    for (let i = 0; i <= nx; i++)
      for (let k = 0; k <= ny; k++) {
        const e = Math.hypot((i / nx - 0.5) * 2, (k / ny - 0.5) * 2);
        if (e > 1.25) continue;
        if (i < nx && rnd() < dens) d += `M${g[i][k]}L${g[i + 1][k]}`;
        if (k < ny && rnd() < dens) d += `M${g[i][k]}L${g[i][k + 1]}`;
      }
  }
  return d;
}
const COAST =
  "M702 553L694 537 699 528 695 518 690 497 682 487 672 473 663 458 674 457 683 450 696 453 694 437 704 430 713 423 708 415 715 412 719 400 705 389 713 385 722 380 726 368 735 362 744 357 754 347 762 349 772 345 786 345 790 351 797 353 806 358 815 363 824 358 836 355 845 357 849 360 849 392 855 393 869 395 901 394 920 387 940 382 965 370 978 360 988 348 990 337 983 320 988 321 995 329 1002 330 1013 327 1026 325 1030 321 1036 326 1044 327 1055 318 1054 305 1062 304 1072 298 1076 290 1087 283 1103 281 1110 274 1117 277 1123 290 1125 300 1136 301 1132 311 1129 318 1130 323 1140 335 1148 333 1160 343 1172 345 1183 344 1190 354 1197 363 1198 390 1207 413 1213 430 1207 445 1203 452 1190 468 1196 480 1200 497 1212 508 1227 523 1245 536 1260 541 1288 546 1500 640 1700 790 1809 815V1003H442V936z";
const COMUNE =
  "M1013 328L1026 327 1030 321 1036 327 1044 328 1055 320 1054 304 1062 305 1072 298 1076 290 1087 283 1103 281 1110 274 1117 277 1123 290 1125 301 1136 301 1132 311 1129 318 1130 323 1140 335 1148 333 1160 343 1172 345 1183 344 1190 354 1197 363 1198 390 1207 413 1213 430 1207 445 1196 450 1190 468 1196 480 1200 497 1212 508 1227 523 1245 536 1260 541 1288 546 1300 548V630L1273 632 1260 630 1250 622 1237 615 1090 600 1093 555 1092 547 1080 545 1077 535 1070 535 1068 527 1063 525 1050 532 1013 534 986 542 993 528 995 513 1003 497 998 480 997 467 1008 457 1023 433 1022 415 1009 396 1023 392 1035 377 1032 365 1043 358 1039 350 1038 340 1030 332z";
const PEAKS = [
  [790, 421], [802, 451], [828, 510], [937, 449], [957, 509], [968, 534], [954, 541], [980, 558], [907, 541], [848, 545], [1015, 358], [1019, 417],
  [1020, 547], [979, 546], [1241, 618], [1251, 646], [1263, 715], [1266, 729], [1271, 762], [1264, 781], [1278, 779], [1257, 803], [1276, 824], [1261, 831],
  [1261, 860], [1276, 869], [1247, 880], [949, 948], [1140, 959], [1119, 935], [1079, 936], [1234, 946], [1263, 958], [1275, 960], [1258, 981], [1199, 991], [1270, 1001],
  [1334, 945], [1342, 967], [1337, 995], [1365, 962], [1415, 977], [1465, 940], [1492, 935], [1506, 929], [1521, 947], [1478, 986], [1532, 973], [1547, 967], [1546, 993],
  [1563, 1001], [1594, 999], [1620, 966], [1681, 979], [1715, 973], [1665, 998], [1758, 1002], [1807, 922], [520, 975], [560, 955], [686, 960], [700, 976], [742, 950],
  [820, 938], [640, 994], [466, 972],
];
function MapView() {
  const d = streets();
  const g = "#bcbcc0";
  return (
    <svg viewBox="442 136 1367 867" className="block h-[867px] w-[1367px]" fontFamily="Noto Sans, sans-serif">
      <defs>
        <clipPath id="com"><path d={COMUNE} /></clipPath>
      </defs>
      <rect x="442" y="136" width="1367" height="867" fill="#aad3df" />
      <path d={COAST} fill="#f2efe9" stroke="#a58cc0" strokeWidth="1.500" />
      <path d="M442 940h200l60-5h1107v68H442z" fill="#f2efe9" />
      {/* urban areas */}
      <g fill="#d8d8d8">
        <path d="M699 438l20-12 14-20 8 4-6 24-14 10-20 26-4-10zM745 410l20-6 8 40-20 14-10-10z" />
        <path d="M824 362l24-4 3 32-12-8-16-12zM985 322l10 10 6 4-6 16-8 22-12 10-12 8-6 14-14 14-20 8-20 8 10-12 22-12 8-14-20 2 12-8 20-12 24-12 14-14z" />
        <path d="M910 432l18-8 8 10-10 20-18 0zM950 472l28 6 1 12-18-8zM865 532l12-2-6 22-4-2z" />
        <path d="M1394 953l12 2-4 12-8-2zM1516 974l14 4-2 12-12-8zM1297 966l12-2-8 8z" />
      </g>
      {/* woods */}
      <g fill="#bddab1">
        <path d="M797 508c8-6 18-4 25 5-8-2-14-6-25-5zM855 510l8-6 16-4 6-2-8 14 4 10 6-10 2 12-14 8-8-6-2 22-22 2-4-10 4-14 14 4zM1018 360l10-4 2 20-6 16-14-2 2-14zM1000 400l8-2 4 24 10 12 0 12-10-2-10-24zM1014 542l10-6 4 14-14 2z" />
        <path d="M1270 701l6 2 5 12-5 10-8 2-2-14zM1244 750l8-3 12 0 4 14 12 6-2 22-4 16-6-4-2 8-10-2 0-10-12-8 8-10-10-12z" />
        <path d="M1237 917l34-8 18 10 10 30-16 0-32-4-14 4z" />
        <path d="M1281 925l6 10-6 20zM1080 994l16-8v4l-14 6z" />
        <path d="M442 975c8-4 14-14 22-12l8 14-14 20-16 6zM480 945l14-6 10 10-12 6zM560 966l10 3-6 5zM1500 935l20 4 10-6v-6h-30z" />
      </g>
      <g fill="none" stroke="#a6d0a4" strokeWidth="3.500">
        <path d="M1220 935c6 14 20 10 34 10l26 4c8 20-8 30-14 38l4 16M1218 940v48l-14 8M1665 925c-8 18-10 28 4 28s16-8 28-8 16 8 24 4M1530 927l12 4-2 6" />
        <path d="M1795 845h14" />
      </g>
      <path d="M1640 925h14l-6 18-28 16-8 4 6-12 16-10z" fill="#aad3df" />
      <g fill="none" stroke="#a5d0e2" strokeWidth="2">
        <path d="M1610 962c0 12-6 16 4 22s-4 14 2 19M916 936l-4 18-14 14-14-2-12 6-8-2-4 14 6 4 2 15M930 936l14 10 6-10M1282 815l-6 4-12 24-10 12-2 30M1280 818h8M1200 993l-20 2-30 8" />
      </g>
      {/* minor roads */}
      <g fill="none" stroke={g} strokeWidth="1">
        <path d="M740 380l6 14-20 22M760 372l-8 24 4 20M815 390l26 24 14 2 40-2 34 8 20 60-4 10M864 398l-3 14M900 394l-26 20M861 416l20 52M910 422l-4 18-14 16-2 12M960 420l8 14-2 14-14 12 6 18-22-2-40 6-14-4M958 478l24 14-2 14-8 12-14 20-26 6-40 10M890 480l10 14-24 6-20 10-6 22" />
        <path d="M704 560l8 20M714 500l6 40M1237 660l50 40M1270 650l18-3" />
        <path d="M480 948l40 20 30-6 20 30 60-4 20-20 50-10 40 20 30-6M560 936l-14 40 20 27M640 936l20 60 50 7M690 936l30 50M760 936l-10 40 30 27M820 943l18 8M940 946l8 28 12 29M962 1003l24-60v-8M940 946l24 0 30 6 16 12 20-4 30 10 26 16 34-2 18-36M1102 975l10 4 4 24M1176 936l12 14 4 18 12 10M1290 970l-16 20-20-8-20 6M1300 985l16-36 26-10 20-2M1360 936l20 16 10 20-20 10M1400 936l-6 30 20 20 0 17M1470 936l20 30-10 30M1488 936v20l20 16 30 8M1500 1003l-10-16-2-40 40-18 12 12-26 14M1690 940l26 24-14 22-24 4-4 13M1716 964l20 36M1730 936l-10 30M1240 936l-8 10" />
      </g>
      <g fill="none" stroke="#8b8b8b" strokeWidth="1.300">
        <path d="M725 560l-10-30-10-24-15-16 2-14 10-8 20-12 12-14 8-22 10-18 14-12 20-4M792 366l-10-14-14-6M803 382l10 10M830 412l34 28c10 4 24 2 34-2l26-18 40-30 20-26 22-32" />
        <path d="M815 394l6 4 6 12" strokeDasharray="5 3" />
      </g>
      {/* motorways */}
      <g fill="none" stroke="#e87189" strokeWidth="2.600" strokeLinejoin="round">
        <path d="M737 556C730 536 728 524 722 512L702 488C699 478 702 470 708 464L732 468C742 468 746 460 752 450L764 432C770 420 768 410 763 396C764 376 770 374 780 373L830 371 856 394 901 395 924 386 944 382 968 370 988 366C1000 360 998 340 1012 329L1032 330 1040 342" />
        <path d="M758 352l12-6 18 4 14 8 10 8 18 4M800 372l10 6M1795 830l14 4" />
        <path d="M464 934c6 6 12 14 10 22s-4 20 2 46" strokeWidth="3" />
      </g>
      <g fill="none" stroke="#f7c16d" strokeWidth="2.200">
        <path d="M822 940l6 20-4 20 4 23M1298 860l-12 8-20 8-14 14-16 12M1424 925l-2 18-30 12c-24 16-40 30-34 48M1210 936l4 20 2 16-14 14-4 10-36 7M820 938l12-4M610 936l16 30-10 37M640 950l60 20 40-14" />
      </g>
      <path d="M720 385l20-14 32-12-28 16-24 8-8 22M726 372l4 8M750 365l4 6" fill="none" stroke="#c3c4e0" strokeWidth="2" />
      {/* marine reserve */}
      <path d="M965 290h20l20 20h36l38-42 53 1v34M965 290v37l12 10h13" fill="none" stroke="#7abfa5" strokeWidth="2.800" />
      {/* ferries */}
      <g fill="none" stroke="#7f90f5" strokeWidth="1.300" strokeDasharray="7 7">
        <path d="M442 190L940 231l190 15M719 136l220 56 160 45 30 9M1329 136l-14 90-20 80-52 180M1384 136l-60 150-80 192M1242 488l46-22M1569 136l40 130 40 120M1809 188l-240 128M1795 760l14 40" />
      </g>
      <g fill="none" stroke="#7f90f5" strokeWidth="1.300">
        <path d="M1100 136l18 30 26 44 30 56 22 32 20 36M1128 246l30 28 34 40 24 20" />
        <path d="M1216 334l10 60 14 96M1214 334l12 66 12 90" strokeDasharray="6 4" />
        <path d="M1240 488l-18 12-16-8-10-10M1236 492l-18 6-10-12" strokeDasharray="4 3" strokeWidth="2" />
      </g>
      <ellipse cx="976" cy="305" rx="4.500" ry="7" fill="#d9dccf" stroke="#5f8f7c" strokeWidth="1.500" />
      {/* municipality and census sections */}
      <g clipPath="url(#com)">
        <path d={COMUNE} fill="#e094b0" />
        <path d={d} fill="none" stroke="#231a1e" strokeWidth="1" />
        <g fill="none" stroke="#2a1f24" strokeWidth="1.100">
          <path d="M1035 377l12 16 28 4 8 8M1022 415l20-8 22 1 6 6-2-10 6 4 12 20M1023 418l24 2 12 7 24 0M1023 434l40-2 10-2 14 4 2-8M1008 457l36-12 26 10h10M998 480l24-8 12 0 4-10-4-4 10 0-2 8 6 14-8 8M1003 497l28 7 2-8 14-4 20 8M1040 345l20 10 20 30 20 18 30 28M1044 340l20 18 26 34 26 24 14 12M1060 350l60 1 32-2M1056 322l4 10 12 16M1090 318l0 34M1078 330l2 10M1084 300l6-2 4 14 8 4-14-4-6-8" />
          <path d="M1148 333l-2 20-6 14M1151 368l10-10 14-2 12 10 2 20M1148 390l4 18 4 34M1152 406l30-12 4-8-10 22 4 14-6 12M1166 392l14 8-2 22 10 20M1145 405l14 24-2 18M1182 360l12 20 0 20-10 18M1148 333l10 14 12 4 12 4" />
          <path d="M1111 428v50M1128 432l-8 30M1096 500l6 20 14 0-4-30M1090 524l100 2M1237 570l50 5M1240 575l24 24 12 6 12 14M1252 585l10-2-2 14 14-6 6 14M1212 516l30 30 46 16M1170 540l6 20M1172 530l-20 16 22-24M1150 560l30-40" />
        </g>
      </g>
      <path d={COMUNE} fill="none" stroke="#2f2328" strokeWidth="1.400" />
      <path d="M1202 447l6 16 8 10M1203 470l18 26M1192 480l12 14" fill="none" stroke="#2f2328" strokeWidth="1.400" />
      {/* peaks */}
      {PEAKS.map(([x, y], i) => <path key={i} d={`M${x} ${y - 8}l4.500 8h-9z`} fill="#d08f55" />)}
      <path d="M975 298l4 9h-8z" fill="#d08f55" />
      <path d="M729 381c1.500 0 1.500 2 1.500 4l6 4v2l-6-2v4l2 2h-7l2-2v-4l-6 2v-2l6-4c0-2 0-4 1.500-4z" fill="#8461c4" />
      <g fill="#4a4a4a" stroke="#fff" strokeWidth="2" strokeOpacity="0.7" paintOrder="stroke" fontSize="12.500">
        <text x="688" y="434" textLength="51">Terrasini</text>
        <text x="961" y="396" textLength="39">Capaci</text>
        <text x="866" y="481" textLength="35">Carini</text>
        <text x="1238" y="660" textLength="62">Mezzagno</text>
        <text x="1794" y="799">se</text>
      </g>
      <text x="442" y="534" fontSize="16" fontStyle="italic" fill="#5f93c9" textLength="108" lengthAdjust="spacingAndGlyphs">astellammare</text>
      <text x="774" y="371" fontSize="12" fill="#9a82b0" transform="rotate(22 774 371)">Sicilia</text>
      <text x="1758" y="140" fontSize="11" fill="#8a719c" transform="rotate(5 1758 140)">Italia</text>
    </svg>
  );
}

/* ---------- data ---------- */
const MENU = [
  [46, "P", "r", "ogetto"], [47, "", "M", "odifica"], [50, "", "V", "isualizza"], [28, "", "L", "ayer"], [68, "", "I", "mpostazioni"], [39, "", "P", "lugins"],
  [37, "Vett", "o", "re"], [32, "", "R", "aster"], [48, "", "D", "atabase"], [24, "", "W", "eb"], [28, "", "M", "esh"], [49, "MMQGIS", "", ""], [57, "Pro", "c", "essing"], [31, "", "G", "uida"],
];
const TREE = [
  [0, ">", "gpkg", "fontanelle.gpkg", 83], [0, ">", "gpkg", "Istat - Popolazione al 2018.gpkg", 167], [0, "v", "gpkg", "istat_territorio_palermo.gpkg", 152],
  [1, ">", "poly", "ISTAT - Circoscrizioni", 109], [1, ">", "poly", "ISTAT - Quartiere", 87], [1, ">", "polyb", "ISTAT - Sezioni Censuarie con info territorio", 226],
  [1, ">", "poly", "ISTAT - UPL", 58], [1, ">", "poly", "Istat Sezioni", 62], [1, ">", "tbl", "Palermo UPL - popolazione residente_00", 212],
  [0, ">", "gpkg", "misilmeri_ctr_10k.gpkg", 121], [0, ">", "gpkg", "misilmeri_ctr_2k.gpkg", 115], [0, ">", "gpkg", "monte_pellegrino.gpkg", 123],
  [0, ">", "gpkg", "natural_earth_vector.gpkg", 137], [0, ">", "gpkg", "OpenEuroRegionalMap.gpkg", 153], [0, ">", "gpkg", "ordinanze.gpkg", 82],
  [0, ">", "gpkg", "Palermo_CTR_10k.gpkg", 123], [0, ">", "gpkg", "Palermo_pop_res_2020.gpkg", 149], [0, ">", "gpkg", "Palermo_pop_res_2020_dot_confronto.gpkg", 230],
  [0, "v", "gpkg", "Palermo_residenti_2020.gpkg", 153], [1, ">", "tbl", "Elenco-codici-e-denominazioni-al-31_12_2021_utf8", 270],
  [1, ">", "tbl", "Palermo_residenti_2020_iso3166", 167], [1, ">", "tbl", "res_italiani_stranieri_iso3166", 146], [0, ">", "gpkg", "Poplazione_residente_palermo_2018_official.gpkg", 260],
];
const TOOLS = [
  ["clock", "Usati di ...", 50], ["q", "Analisi ...", 46], ["q", "Analisi ...", 46], ["q", "Analisi r...", 51], ["q", "Analisi s...", 52], ["q", "Cartogr...", 49], ["q", "Creazio...", 48],
  ["q", "Creazio...", 48], ["q", "Database", 48], ["q", "Geomet...", 51], ["q", "GPS", 21], ["q", "Grafici", 34], ["q", "Interpol...", 50], ["q", "Mesh", 29], ["q", "Selezion...", 52],
  ["q", "Sovrapp...", 52], ["q", "Strume...", 47], ["q", "Strume...", 47], ["q", "Strume...", 47], ["q", "Tabella ...", 48], ["q", "Tasselli ...", 48], ["q", "Vettore ...", 49],
  ["gdal", "GDAL", 30], ["netw", "Networks", 50], ["hex", "ORS Tools", 52], ["", "Pelias Geoc...", 69], ["gear", "qgis2web", 50], ["quick", "QuickO...", 49], ["saga", "SAGA", 30], ["toc", "TOCTABLE", 54], ["wb", "Whitebo...", 54],
];
const PROPS = [
  ["info", "Informazioni", 67], ["wrench", "Sorgente", 47], ["brush", "Simbologia", 60], ["laby", "Etichette", 47], ["mask", "Maschere", 51], ["cube", "Vista 3D", 42],
  ["diag", "Diagrammi", 59], ["campi", "Campi", 35], ["modulo", "Modulo Attributi", 89], ["join", "Join", 21], ["aux", "Dati Ausiliari", 66], ["act", "Azioni", 32],
];
const JOIN = [
  ["Campo unione", 79, "Denominazione IT", 96], ["Campo destinazione", 108, "Nazione", 43], ["Vettore unito in memoria virtuale", 174, "✔", 0], ["Modulo dinamico", 95],
  ["Layer di join modificabile", 133], ["Inserimento in modifica", 126], ["Elimina a cascata", 90], ["Prefisso del nome del campo personalizzato", 230], ["Campi uniti", 62, "15", 12],
];
const FIELDS = [
  ["fid", 14], ["Stato(S)/Territorio(T)", 107], ["Codice Continente", 99], ["Denominazione Continente (IT)", 165], ["Codice Area", 64], ["Denominazione Area (IT)", 130],
  ["Codice ISTAT", 67], ["Denominazione IT", 95], ["Denominazione EN", 101], ["Codice MIN", 63], ["Codice AT", 55],
];
const SIDE = [
  ["vadd"], ["rasadd"], ["meshadd"], ["comma"], ["feather"], ["vbox"], ["pg", 1], ["wms"], ["wcs"], ["wfs"], ["box", 1], ["mladd", 1],
];
const SideIc = ({ n, a }) => (
  <div className="flex h-6 shrink-0 items-center pl-2"><Ic n={n} />{a && <div className="ml-[6px]"><Dn /></div>}</div>
);
const SideIn = ({ n, h = "h-6" }) => <div className={h + " flex shrink-0 items-center pl-[14px]"}><Ic n={n} /></div>;

export default function App() {
  return (
    <div className="relative flex h-[1032px] w-[1920px] flex-col overflow-hidden bg-[#efefef] font-['Noto_Sans',sans-serif] text-[12px] leading-none text-black">
      {/* title bar */}
      <div className="flex h-[23px] shrink-0 items-center bg-white pl-[2px] text-[#8b8b8b]">
        <Ic n="q" />
        <T w={282} className="ml-[5px]">*Palermo_residenti_2020_iso_3166 — QGIS [gbvitrano]</T>
        <svg viewBox="0 0 112 12" className="mr-[10px] mb-[3px] ml-auto h-3 w-[112px]"><path d="M1 6.500h10M46.500 4.500h7v7h-7zM49 4.500v-2.500h7v7h-2.500M91 2l9.500 9.500M100.500 2L91 11.500" fill="none" stroke="#888" /></svg>
      </div>
      <div className="flex h-5 shrink-0 items-center gap-[14px] border-b border-[#d4d4d4] pl-[10px] text-[#949494]">
        {MENU.map(([w, a, b, e]) => <T key={a + b + e} w={w}>{a}<U>{b}</U>{e}</T>)}
      </div>
      <Bar>
        <Set t="| new open save tmpl layout style | pan -pansel *zoomin zoomout zoomfull -zsel -zlay -z11 zprev -znext newmap new3d bmnew book clock refresh | -ident abacus *gear sigma table v ruler v tip -loc w" />
        <div className="w-[84px] shrink-0" />
        <Set t="| help | -hist -hist2 -hist -hist2 -sun1 -sun1 -half -half -gam -gam cat | python batt swirl fig leaf nodes gnav grid person meshlay v" />
      </Bar>
      <Bar>
        <Set t="| -pencils pencil -saved -rec -vtool w -editrec -trash -cutx -copy -paste -undo -redo | -setsq -curve w -blob w -blob -blob -blob2 -blob3 -blob4 -blob3 -blob3 -blob4 -shape -slug -vnode -cross -cutg -cutg -spiral -lines -rot w | -arcn w -circ w -elli w -rectn w -pent w | *magnet vsnap *dots" />
        <div className="-ml-px flex h-5 w-[90px] shrink-0 items-center justify-between rounded-[2px] border border-[#9c9c9c] bg-white pl-1">
          <T w={21}>5,00</T>
          <div className="flex h-full w-[14px] flex-col items-center justify-center gap-[3px] border-l border-[#b4b4b4] bg-[#f4f4f4]"><Up /><Dn /></div>
        </div>
        <div className="ml-[2px] flex h-[21px] w-[87px] shrink-0 items-center justify-between rounded-[2px] border border-[#9c9c9c] bg-gradient-to-b from-white to-[#f0f0f0] pr-2 pl-1"><T w={25}>metri</T><Dn /></div>
        <Set t="yline topo" />
        <span className="w-[24px] shrink-0 text-center text-[15px] text-[#444]">»</span>
        <div className="-ml-[5px]" />
        <Set t="| -lab -labs s labp labr s -labg -labe -laba" />
        <span className="w-[16px] shrink-0 text-center text-[15px] text-[#444]">»</span>
        <div className="-ml-[4px]" />
        <Set t="| db" />
      </Bar>
      <Bar h="h-[30px]">
        <Set t="| -sel w form v desel v selloc | num |" />
        <div className="-ml-[2px]" />
        <Set t="| slash | point | g1 g2 g3 | wand | -geo -geo2 w -geo3 -geo4 w | lab2 v arr polyg polyl star textT" />
        <div className="-ml-[2px]" />
        <Set t="s tbox v | share |" />
        <div className="-ml-px flex w-[25px] shrink-0 justify-center opacity-80"><Ic n="rel" /></div>
        <div className="flex h-[21px] w-[210px] shrink-0 items-center justify-between rounded-[3px] border border-[#b4b4b4] bg-[#f6f6f6] pr-2 pl-1 text-[#666]"><T w={96}>Select relationship...</T><Dn c="fill-[#8c8c8c]" /></div>
        <Set t="-relx | quick osm" />
      </Bar>

      <div className="flex h-[869px] shrink-0">
        {/* side toolbar */}
        <div className="flex w-[44px] shrink-0 flex-col border-r border-[#b8b8b8] bg-gradient-to-r from-[#f9f9f9] to-[#eeeeee]">
          <div className="mt-[6px] flex h-[7px] shrink-0 justify-center"><Dots /></div>
          {SIDE.map(([n, a]) => <SideIc key={n} n={n} a={a} />)}
          <div className="mt-[10px] flex h-[6px] shrink-0 justify-center"><Dots /></div>
          <div className="h-[1px]" />
          <SideIn n="layers" /><SideIn n="box" /><SideIn n="vaddy" /><SideIn n="feathery" /><SideIn n="chip" /><SideIn n="meshy" />
          <div className="mx-[10px] my-[4px] h-px shrink-0 bg-[#c9c9c9]" />
          <SideIn n="vboxy" h="h-[21px]" />
          <div className="mx-[10px] my-[4px] h-px shrink-0 bg-[#c9c9c9]" />
          <div className="mt-[8px] flex h-[5px] shrink-0 justify-center"><Dots /></div>
          <SideIn n="vert" h="h-[27px]" /><SideIn n="cross2" h="h-[25px]" />
          <div className="mt-[7px] flex h-[6px] shrink-0 justify-center"><Dots /></div>
          <SideIn n="xyz" h="h-[26px]" /><SideIn n="hex" h="h-[25px]" /><SideIn n="alpha" h="h-[25px]" />
          <SideIc n="gq" /><SideIn n="gq" /><SideIn n="binoc" />
        </div>

        {/* left docks */}
        <div className="flex w-[392px] shrink-0 flex-col">
          <div className="flex h-[22px] shrink-0 items-center justify-between pr-[2px] pl-1"><T w={28}>Layer</T><Float /></div>
          <div className="flex h-[28px] shrink-0 items-center pb-px pl-[3px]"><Set t="brush addgrp eye funnel eps v expd expu rem" /></div>
          <div className="mt-[1px] flex h-[318px] shrink-0 flex-col border border-[#b9b9b9] bg-white font-bold">
            <div className="flex h-[18px] shrink-0 items-center pl-[23px]"><Check on /><div className="ml-[6px] size-4 border border-[#7f4b5e] bg-[#e094b0]" /><T w={242} className="ml-[6px]">ISTAT - Sezioni Censuarie con info territorio</T></div>
            <div className="flex h-[18px] shrink-0 items-center bg-[#efefef] pl-[23px]"><Ic n="tblb" /><T w={157} className="ml-[6px] underline underline-offset-1">res_italiani_stranieri_iso3166</T></div>
            <div className="flex h-[18px] shrink-0 items-center pl-[23px]"><Ic n="tbl" /><T w={285} className="ml-[6px]">Elenco-codici-e-denominazioni-al-31_12_2021_utf8</T></div>
            <div className="flex h-[18px] shrink-0 items-center pl-[7px]"><Dn /><div className="ml-[9px]"><Check on /></div><div className="ml-[7px]"><Ic n="raster" /></div><T w={80} className="ml-[5px]">OSM Standard</T></div>
          </div>
          <div className="flex h-[23px] shrink-0 items-start">
            <div className="flex h-[23px] w-[49px] items-center justify-center rounded-b-[3px] border border-t-0 border-[#b9b9b9] bg-[#f8f8f8] pr-[2px]"><T w={21}>La...</T></div>
            <div className="flex h-[21px] w-[80px] items-center justify-center border-r border-b border-[#bdbdbd] bg-[#dcdcdc] pr-[2px]"><T w={52}>Ordine la...</T></div>
            <div className="flex h-[21px] w-[146px] items-center justify-center border-r border-b border-[#bdbdbd] bg-[#dcdcdc] pr-[2px]"><T w={117}>Gestore Segnalibri Spa...</T></div>
            <div className="flex h-[21px] w-[117px] items-center justify-center rounded-br-[3px] border-r border-b border-[#bdbdbd] bg-[#dcdcdc] pr-[2px]"><T w={88}>OSM place searc...</T></div>
          </div>
          <div className="flex h-[8px] shrink-0 items-center justify-center"><Dots /></div>
          <div className="flex h-[20px] shrink-0 items-center justify-between pr-[2px] pl-1"><T w={42}>Browser</T><Float /></div>
          <div className="flex h-[28px] shrink-0 items-center pb-px pl-[3px]"><Set t="addl refresh funnel expu info" /></div>
          <div className="mt-[2px] flex h-[418px] shrink-0 overflow-hidden border border-[#b9b9b9] bg-white">
            <div className="flex w-[376px] shrink-0 flex-col pt-[1px]">
              {TREE.map(([lv, ar, ic, t, w]) => (
                <div key={t} className={"flex h-[18px] shrink-0 items-center " + (lv ? "pl-[37px] " : "pl-[21px] ") + (ic === "polyb" ? "bg-[#efefef]" : "")}>
                  <div className="flex w-[7px] justify-center">{ar === ">" ? <Rt /> : <Dn />}</div>
                  <div className="ml-[8px] flex w-4 justify-center">{ic === "gpkg" ? <Ic n={ic} s="size-[14px]" /> : <Ic n={ic} />}</div>
                  <T w={w} className="ml-[5px]">{t}</T>
                </div>
              ))}
            </div>
            <div className="flex w-[14px] flex-col justify-end border-l border-[#bdbdbd] bg-[#e2e2e2]"><div className="flex h-[14px] items-center justify-center border-t border-[#bdbdbd] bg-[#f6f6f6]"><Dn /></div></div>
          </div>
        </div>
        <div className="w-[6px] shrink-0" />
        {/* map canvas */}
        <div className="h-[869px] w-[1367px] shrink-0 overflow-hidden border-t border-b border-[#b0b0b0]"><MapView /></div>
        <div className="w-[7px] shrink-0" />
        {/* processing toolbox */}
        <div className="flex w-[104px] shrink-0 flex-col">
          <div className="flex h-[22px] shrink-0 items-center justify-between pr-[2px] pl-1"><T w={63}>Strumenti ...</T><Float /></div>
          <div className="flex h-[28px] shrink-0 items-center pb-px pl-1"><Set t="gears python clock" /><span className="ml-[12px] text-[14px] text-[#444]">»</span></div>
          <div className="mt-[1px] flex h-[22px] shrink-0 items-center rounded-[2px] border border-[#b9b9b9] bg-white pl-2 text-[#777]"><Ic n="search" s="size-[13px]" /><T w={40} className="ml-[7px]">Cerca...</T></div>
          <div className="flex min-h-0 flex-1 flex-col border-l border-[#b9b9b9] bg-white pt-[2px]">
            {TOOLS.map(([ic, t, w], i) => (
              <div key={i} className={(i > 22 && i < 27 ? "h-[17px] " : "h-[18px] ") + "flex shrink-0 items-center pl-[7px]"}>
                <Rt />
                {ic ? <div className="ml-[12px] flex w-4 justify-center"><Ic n={ic} s="size-[15px]" /></div> : <div className="w-3" />}
                <T w={w} className={ic ? "ml-[5px]" : ""}>{t}</T>
              </div>
            ))}
          </div>
          <div className="flex h-[68px] shrink-0 flex-col items-start border border-[#3b7fc4] bg-[#56a9f7] pt-[2px] pl-[3px] leading-[13px] text-white">
            <T w={77}>Puoi aggiungere</T>
            <T w={91}>ulteriori algoritmi al</T>
            <T w={92}>riquadro strumenti,</T>
            <T w={88} className="text-[#0a0aee] underline">abilitando fornitori</T>
            <div className="flex gap-[9px] text-[#0a0aee] underline"><T w={50}>aggiuntivi.</T><T w={34}>[chiudi]</T></div>
          </div>
        </div>
      </div>

      {/* status bar */}
      <div className="flex h-[28px] shrink-0 items-center pl-1 [&>*]:shrink-0">
        <div className="flex h-[21px] w-[253px] items-center rounded-[3px] border border-[#b0b0b0] bg-white pl-2 text-[#777]"><Ic n="search" s="size-[13px]" /><T w={140} className="ml-[6px]">Digita per localizzare (Ctrl+K)</T></div>
        <T w={186} className="ml-[7px]">Attiva/disattiva modifica vettore in uso</T>
        <T w={53} className="ml-[591px]">Coordinata</T>
        <div className="ml-1 flex h-[21px] w-[101px] items-center justify-center rounded-[2px] border border-[#b0b0b0] bg-white"><T w={87}>1438705 4601713</T></div>
        <svg viewBox="0 0 16 16" className="ml-[4px] size-4"><path d="M2 2l4 3M1 7h4M8 1v3M14 1l-3 3M15 6l-3 1M2 13l3-3" stroke="#333" /><rect x="6" y="4" width="6" height="11" rx="3" transform="rotate(-25 9 9)" fill="#bbb" stroke="#222" strokeWidth="1.800" /><path d="M5 8l7-3M6 11l7-3" stroke="#222" strokeWidth="1.300" /></svg>
        <T w={25} className="ml-[12px]">Scala</T>
        <div className="ml-1 flex h-[21px] w-[80px] items-center rounded-[2px] border border-[#b0b0b0] bg-white pl-1"><T w={46}>1:247442</T><div className="ml-auto flex h-full w-[20px] items-center justify-center border-l border-[#b0b0b0]"><Dn /></div></div>
        <svg viewBox="0 0 12 16" className="ml-[13px] h-[15px] w-3"><path d="M3 8V4.500a3 3 0 0 1 6 0V8" fill="none" stroke="#777" strokeWidth="1.800" /><rect y="7" width="12" height="9" rx="1" fill="#555" /></svg>
        <T w={106} className="ml-[8px]">Lente d'ingrandimento</T>
        <div className="ml-[5px] flex h-[21px] w-[83px] items-center justify-between rounded-[2px] border border-[#b0b0b0] bg-white pl-1"><T w={28}>100%</T><div className="flex h-full w-[13px] flex-col items-center justify-center gap-[4px] border-l border-[#c4c4c4]"><Up /><Dn /></div></div>
        <T w={48} className="ml-[9px]">Rotazione</T>
        <div className="ml-[10px] flex h-[21px] w-[84px] items-center justify-between rounded-[2px] border border-[#b0b0b0] bg-white pl-1"><T w={24}>0,0 °</T><div className="flex h-full w-[13px] flex-col items-center justify-center gap-[4px] border-l border-[#c4c4c4]"><Up /><Dn /></div></div>
        <div className="ml-[6px]"><Check on /></div>
        <T w={45} className="ml-[4px]">Visualizza</T>
        <svg viewBox="0 0 16 16" className="ml-[16px] size-[14px]"><circle cx="8" cy="8" r="7" fill="#ccc" stroke="#666" /><path d="M8 1v14M1 8h14M3 4h10M3 12h10M8 1c-4 4-4 10 0 14M8 1c4 4 4 10 0 14" fill="none" stroke="#666" /></svg>
        <T w={54} className="ml-[2px]">EPSG:3857</T>
        <svg viewBox="0 0 16 15" className="ml-[23px] h-[15px] w-4"><path d="M8 0c5 0 8 2.500 8 6s-3 6-6 6l4 3c-4 0-6-1-7-3-4 0-7-2.500-7-6s3-6 8-6z" fill="#4f4f4f" /><circle cx="4.500" cy="6" r="1.200" fill="#fff" /><circle cx="8" cy="6" r="1.200" fill="#fff" /><circle cx="11.500" cy="6" r="1.200" fill="#fff" /></svg>
      </div>

      {/* layer properties window */}
      <div className="absolute top-[553px] left-[358px] flex h-[383px] w-[878px] flex-col overflow-hidden rounded-[8px] border border-[#a8a8a8] bg-[#efefef] shadow-[0_2px_8px_rgba(0,0,0,0.3)]">
        <div className="flex h-[31px] shrink-0 items-center bg-white pr-[9px] pb-px pl-[7px] text-[#929292]"><Ic n="q" /><T w={282} className="ml-[5px]">Proprietà Layer — res_italiani_stranieri_iso3166 — Join</T><svg viewBox="0 0 10 10" className="ml-auto size-[10px] overflow-visible"><path d="M0 0l10 10M10 0L0 10" stroke="#888" /></svg></div>
        <div className="flex min-h-0 flex-1">
          <div className="flex w-[254px] shrink-0 flex-col bg-[#5d5d5d]">
            <div className="flex h-[21px] shrink-0 items-center rounded-b-[2px] border border-[#aaa] bg-white pl-[8px]"><Ic n="search" s="size-[12px]" /></div>
            <div className="mt-[6px] flex min-h-0 flex-1">
              <div className="flex w-[240px] flex-col pt-px text-[12.5px] text-white">
                {PROPS.map(([ic, t, w]) => (
                  <div key={t} className={"flex h-7 shrink-0 items-center " + (ic === "join" ? "bg-[#efefef] pl-[6px] text-black" : ic === "act" ? "pl-[7px]" : "pl-[3px]")}>
                    <Ic n={ic} s={ic === "join" ? "size-[19px]" : "size-[18px]"} /><T w={w} className={ic === "act" ? "ml-[4px]" : ic === "join" ? "ml-[6px]" : "ml-[7px]"}>{t}</T>
                  </div>
                ))}
              </div>
              <div className="flex w-[14px] flex-col border-l border-[#bdbdbd] bg-[#e2e2e2]">
                <div className="flex h-[13px] items-center justify-center border-b border-[#bdbdbd] bg-[#f4f4f4]"><Up /></div>
                <div className="h-[155px] border-b border-[#bdbdbd] bg-[#fafafa]" />
                <div className="mt-auto flex h-[14px] items-center justify-center border-t border-[#bdbdbd] bg-[#f4f4f4]"><Dn /></div>
              </div>
            </div>
          </div>
          <div className="flex min-w-0 flex-1 flex-col pt-[2px] pr-[2px] pl-[4px]">
            <div className="flex h-[288px] shrink-0 flex-col border border-[#b4b4b4] bg-white">
              <div className="flex h-[19px] shrink-0 items-center border-b border-[#b4b4b4] bg-gradient-to-b from-white to-[#efefef] pt-px"><div className="flex h-full w-[277px] items-center border-r border-[#c4c4c4] pl-[2px]"><T w={71}>Impostazione</T></div><T w={32} className="ml-[2px]">Valore</T></div>
              <div className="flex h-[15px] shrink-0 items-center pt-px pl-[6px] font-bold"><Dn /><div className="flex w-[267px] pl-[10px]"><T w={78}>Vettore di join</T></div><T w={285}>Elenco-codici-e-denominazioni-al-31_12_2021_utf8</T></div>
              {JOIN.map(([a, w, b, w2], i) => (
                <div key={a} className={"flex h-[15px] shrink-0 items-center pl-[43px] " + (i % 2 ? "" : "bg-[#e8e7e3]")}>
                  <div className="w-[237px]"><T w={w}>{a}</T></div>
                  {b === "✔" ? <svg viewBox="0 0 12 10" className="h-[9px] w-[11px]"><path d="M0 5l3-1 1.500 2.500L11 0l1 .5L5 9.500H3.500z" /></svg> : b ? <T w={w2}>{b}</T> : null}
                </div>
              ))}
            </div>
            <div className="mt-[6px] flex h-6 shrink-0 gap-[6px]">
              <div className="flex w-7 items-center justify-center rounded-[2px] border border-[#acacac] bg-[#f8f8f8]"><svg viewBox="0 0 14 14" className="size-[14px]"><path d="M5 1h4v4h4v4H9v4H5V9H1V5h4z" fill="#fff" stroke="#3f7f49" /><path d="M7 3v8M3 7h8" stroke="#3f7f49" strokeWidth="1.500" /></svg></div>
              <div className="flex w-7 items-center justify-center rounded-[2px] border border-[#acacac] bg-[#f8f8f8]"><svg viewBox="0 0 14 6" className="h-[6px] w-[14px]"><path d="M.5.5h13v5H.5z" fill="#fff" stroke="#e5403a" /><path d="M2.500 3h9" stroke="#e5403a" strokeWidth="1.500" /></svg></div>
              <div className="flex w-7 items-center justify-center rounded-[2px] border border-[#acacac] bg-[#f8f8f8]"><Ic n="pencil" /></div>
            </div>
            <div className="mt-[6px] flex shrink-0 items-center gap-[6px]">
              <Btn><T w={20} className="ml-[12px]">Stile</T><div className="ml-[25px]"><Dn s="w-[6px] h-[3px]" /></div></Btn>
              <div className="flex-1" />
              <Btn><T w={14}>OK</T></Btn><Btn><T w={35}>Annulla</T></Btn><Btn><T w={34}>Applica</T></Btn><Btn><T w={24}>Aiuto</T></Btn>
            </div>
          </div>
        </div>
      </div>

      {/* edit join window */}
      <div className="absolute top-[318px] left-[1288px] flex h-[608px] w-[507px] flex-col overflow-hidden rounded-[8px] border border-[#4c4a48] bg-[#efefef] shadow-[0_4px_14px_rgba(0,0,0,0.35)]">
        <div className="flex h-[30px] shrink-0 items-center bg-[#4c4a48] pr-[10px] pl-2 text-white"><Ic n="q" /><T w={177} className="ml-[5px]">Modifica Collegamento Vettoriale</T><svg viewBox="0 0 10 10" className="ml-auto size-[10px] overflow-visible"><path d="M0 0l10 10M10 0L0 10" stroke="#fff" strokeWidth="1.200" /></svg></div>
        <div className="flex flex-col pt-[11px] pr-[11px] pl-[11px]">
          {[["Vettore di join", 67, "tbl", "Elenco-codici-e-denominazioni-al-31_12_", 193], ["Campo unione", 67, "abc", "Denominazione IT", 86], ["Campo destinazione", 96, "abc", "Nazione", 38]].map(([a, w, ic, b, w2]) => (
            <div key={a} className="mb-[6px] flex h-6 items-center justify-between">
              <T w={w} className="pt-[2px]">{a}</T>
              <div className="flex h-6 w-[238px] items-center rounded-[2px] border border-[#acacac] bg-gradient-to-b from-white to-[#f0f0f0] pr-[7px] pl-[5px]">
                <div className="flex w-[15px] shrink-0">{ic === "tbl" ? <Ic n="tbl" /> : <T w={15} className="text-[9px] font-bold text-[#555]">abc</T>}</div>
                <T w={w2} className="ml-[3px] pt-[2px]">{b}</T><div className="flex-1" /><Dn />
              </div>
            </div>
          ))}
          <div className="mt-[-3px] flex h-[25px] items-center gap-1"><Check on /><T w={146}>Cache unione layer in memoria</T></div>
          <div className="flex h-[25px] items-center gap-1"><Check /><T w={146}>Crea un indice nel campo unito</T></div>
          <div className="flex h-[25px] items-center gap-1"><Check /><T w={78}>Modulo dinamico</T></div>
          <div className="flex h-[22px] items-center pl-[2px]"><Dn s="w-[11px] h-[7px]" c="fill-[#2b2b2b]" /><div className="ml-[7px]"><Check /></div><T w={131} className="ml-2">Layer di unione modi<U>f</U>icabile</T></div>
          <div className="ml-px flex h-[67px] flex-col rounded-[2px] border border-[#d2d2d2] bg-[#ececec] pt-[7px] pl-[10px] text-[#808080]">
            <div className="flex h-[25px] items-center gap-1"><Check off /><T w={110}>Inserimento in modifica</T></div>
            <div className="flex h-[25px] items-center gap-1"><Check off /><T w={81}>Elimina a cascata</T></div>
          </div>
          <div className="mt-px flex h-[23px] items-center pt-[3px] pl-[2px]"><Dn s="w-[11px] h-[7px]" c="fill-[#2b2b2b]" /><div className="ml-[7px]"><Check on /></div><T w={52} className="ml-2"><U>C</U>ampi uniti</T></div>
          <div className="ml-px flex h-[179px] flex-col rounded-[2px] border border-[#d2d2d2] bg-[#ececec] pt-[10px] pr-[11px] pl-[10px]">
            <div className="flex h-[157px] overflow-hidden border border-[#a8a8a8] bg-white">
              <div className="flex flex-1 flex-col">
                {FIELDS.map(([t, w], i) => <div key={t} className="flex h-[15px] shrink-0 items-center pl-[3px]"><Check on={i > 0} /><T w={w} className="ml-[6px]">{t}</T></div>)}
              </div>
              <div className="flex w-[14px] flex-col border-l border-[#bdbdbd] bg-[#e2e2e2]">
                <div className="flex h-[14px] items-center justify-center border-b border-[#bdbdbd] bg-[#f4f4f4]"><Up /></div>
                <div className="h-[79px] border-b border-[#bdbdbd] bg-[#fafafa]" />
                <div className="mt-auto flex h-[14px] items-center justify-center border-t border-[#bdbdbd] bg-[#f4f4f4]"><Dn /></div>
              </div>
            </div>
          </div>
          <div className="flex h-[24px] items-center pt-[4px] pl-[2px]"><Dn s="w-[11px] h-[7px]" c="fill-[#2b2b2b]" /><div className="ml-[7px]"><Check on /></div><T w={207} className="ml-2">Prefisso del <U>n</U>ome del campo personalizzato</T></div>
          <div className="ml-px flex h-[45px] flex-col rounded-[2px] border border-[#d2d2d2] bg-[#ececec] pt-[10px] pr-[11px] pl-[10px]"><div className="h-[22px] rounded-[2px] border border-[#a8a8a8] bg-white" /></div>
          <div className="mt-[11px] flex justify-end gap-[6px] pr-px"><Btn blue><T w={14}>OK</T></Btn><Btn><T w={35}>Annulla</T></Btn><Btn><T w={25}>Aiuto</T></Btn></div>
        </div>
      </div>

      {/* step markers */}
      <Badge n="1" at="left-[389px] top-[199px]" /><Badge n="2" at="left-[509px] top-[854px]" /><Badge n="3" at="left-[615px] top-[835px]" /><Badge n="4" at="left-[1501px] top-[315px]" />
      <Badge n="5" at="left-[1501px] top-[391px]" /><Badge n="6" at="left-[1527px] top-[721px]" /><Badge n="7" at="left-[1353px] top-[793px]" /><Badge n="8" at="left-[1492px] top-[891px]" />
    </div>
  );
}
